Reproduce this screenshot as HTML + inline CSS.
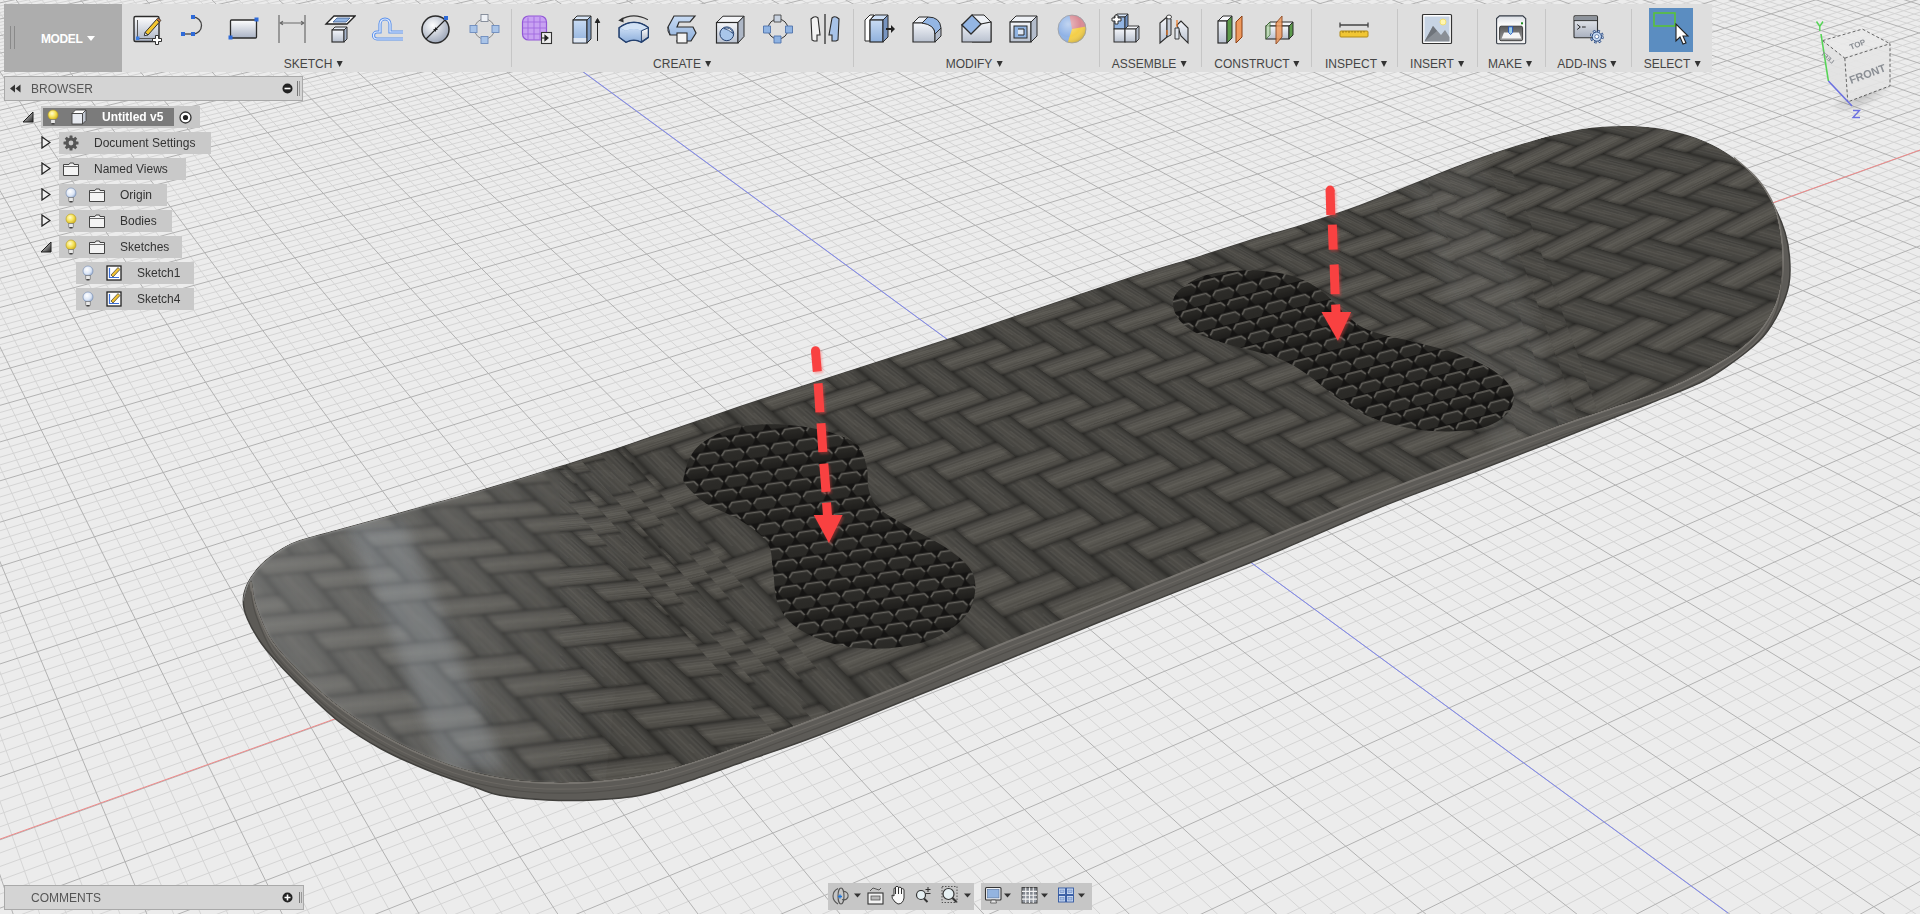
<!DOCTYPE html>
<html><head><meta charset="utf-8"><title>Fusion</title>
<style>
html,body{margin:0;padding:0;width:1920px;height:914px;overflow:hidden;background:#ececec;font-family:"Liberation Sans",sans-serif;}
.layer{position:absolute;left:0;top:0;width:1920px;height:914px;}
.clip{position:absolute;left:0;top:0;width:1920px;height:914px;overflow:hidden;}
.tex{position:absolute;left:0;top:0;transform-origin:0 0;}
.ui{position:absolute;font-family:"Liberation Sans",sans-serif;}
#tb{left:122px;top:4px;width:1590px;height:68px;background:#dedede;}
#model{left:4px;top:4px;width:118px;height:68px;background:#adadad;}
#model .grip{position:absolute;top:22px;width:1px;height:23px;background:#8a8a8a;}
#model .t{position:absolute;left:37px;top:28px;color:#fff;font-weight:bold;font-size:12px;letter-spacing:-0.4px;}
.sep{position:absolute;top:5px;width:1px;height:58px;background:#c6c6c6;}
.lbl{position:absolute;top:53px;font-size:12px;color:#454545;white-space:nowrap;line-height:14px;}
.lbl b{display:inline-block;width:0;height:0;border-left:3.5px solid transparent;border-right:3.5px solid transparent;border-top:6px solid #333;margin-left:4px;vertical-align:1px;}
.ic{position:absolute;top:10px;width:34px;height:36px;overflow:visible;}
.panel{position:absolute;background:#d4d4d4;border:1px solid #a9a9a9;box-sizing:border-box;}
.ptxt{position:absolute;font-size:12px;color:#555;line-height:14px;}
.row{position:absolute;height:21px;background:#c9c9c9;}
.rtxt{position:absolute;top:3px;font-size:12px;color:#333;line-height:14px;white-space:nowrap;}
.tri{position:absolute;}
.nav{position:absolute;top:883px;height:27px;background:#c6c6c6;}

</style></head><body>
<svg class="layer" width="1920" height="914" viewBox="0 0 1920 914">
<rect width="1920" height="914" fill="#ececec"/>
<path d="M-2.0 795.8L40.4 916.0M-2.0 728.6L67.1 916.0M-2.0 666.8L93.9 916.0M-2.0 609.8L120.8 916.0M-2.0 508.1L174.6 916.0M-2.0 462.5L201.7 916.0M-2.0 420.0L228.8 916.0M-2.0 380.3L255.9 916.0M-2.0 308.1L310.5 916.0M-2.0 275.2L337.8 916.0M-2.0 244.2L365.2 916.0M-2.0 214.9L392.7 916.0M-2.0 161.1L447.9 916.0M-2.0 136.2L475.6 916.0M-2.0 112.6L503.4 916.0M-2.0 90.1L531.2 916.0M-2.0 48.4L587.0 916.0M-2.0 29.0L615.0 916.0M-2.0 10.4L643.1 916.0M1.9 -2.0L671.3 916.0M27.5 -2.0L727.8 916.0M40.3 -2.0L756.2 916.0M53.2 -2.0L784.6 916.0M66.1 -2.0L813.1 916.0M92.0 -2.0L870.3 916.0M105.0 -2.0L899.0 916.0M118.0 -2.0L927.8 916.0M131.1 -2.0L956.7 916.0M157.3 -2.0L1014.6 916.0M170.5 -2.0L1043.6 916.0M183.6 -2.0L1072.8 916.0M196.9 -2.0L1102.0 916.0M223.4 -2.0L1160.6 916.0M236.7 -2.0L1190.0 916.0M250.1 -2.0L1219.5 916.0M263.4 -2.0L1249.1 916.0M290.3 -2.0L1308.4 916.0M303.8 -2.0L1338.2 916.0M317.3 -2.0L1368.1 916.0M330.9 -2.0L1398.0 916.0M358.1 -2.0L1458.1 916.0M371.7 -2.0L1488.3 916.0M385.4 -2.0L1518.5 916.0M399.1 -2.0L1548.9 916.0M426.7 -2.0L1609.7 916.0M440.5 -2.0L1640.3 916.0M454.4 -2.0L1670.9 916.0M468.3 -2.0L1701.6 916.0M496.1 -2.0L1763.2 916.0M510.1 -2.0L1794.2 916.0M524.2 -2.0L1825.2 916.0M538.3 -2.0L1856.3 916.0M566.5 -2.0L1918.7 916.0M580.7 -2.0L1922.0 897.2M594.9 -2.0L1922.0 876.7M609.2 -2.0L1922.0 856.6M637.8 -2.0L1922.0 817.6M652.1 -2.0L1922.0 798.8M666.5 -2.0L1922.0 780.4M681.0 -2.0L1922.0 762.3M709.9 -2.0L1922.0 727.3M724.5 -2.0L1922.0 710.3M739.1 -2.0L1922.0 693.7M753.7 -2.0L1922.0 677.4M783.1 -2.0L1922.0 645.8M797.8 -2.0L1922.0 630.4M812.6 -2.0L1922.0 615.3M827.4 -2.0L1922.0 600.5M857.1 -2.0L1922.0 571.8M872.1 -2.0L1922.0 557.8M887.0 -2.0L1922.0 544.1M902.0 -2.0L1922.0 530.6M932.2 -2.0L1922.0 504.4M947.3 -2.0L1922.0 491.6M962.5 -2.0L1922.0 479.1M977.7 -2.0L1922.0 466.7M1008.2 -2.0L1922.0 442.7M1023.6 -2.0L1922.0 431.0M1038.9 -2.0L1922.0 419.4M1054.3 -2.0L1922.0 408.1M1085.3 -2.0L1922.0 386.0M1100.8 -2.0L1922.0 375.2M1116.4 -2.0L1922.0 364.6M1132.0 -2.0L1922.0 354.2M1163.4 -2.0L1922.0 333.8M1179.1 -2.0L1922.0 323.8M1194.9 -2.0L1922.0 314.0M1210.7 -2.0L1922.0 304.4M1242.5 -2.0L1922.0 285.5M1258.5 -2.0L1922.0 276.3M1274.5 -2.0L1922.0 267.2M1290.5 -2.0L1922.0 258.2M1322.7 -2.0L1922.0 240.7M1338.9 -2.0L1922.0 232.1M1355.1 -2.0L1922.0 223.7M1371.4 -2.0L1922.0 215.3M1404.1 -2.0L1922.0 199.0M1420.5 -2.0L1922.0 191.1M1436.9 -2.0L1922.0 183.2M1453.4 -2.0L1922.0 175.4M1486.5 -2.0L1922.0 160.2M1503.1 -2.0L1922.0 152.7M1519.8 -2.0L1922.0 145.4M1536.5 -2.0L1922.0 138.1M1570.1 -2.0L1922.0 123.9M1586.9 -2.0L1922.0 116.9M1603.8 -2.0L1922.0 110.0M1620.8 -2.0L1922.0 103.2M1654.8 -2.0L1922.0 89.9M1671.9 -2.0L1922.0 83.4M1689.1 -2.0L1922.0 76.9M1706.3 -2.0L1922.0 70.5M1740.8 -2.0L1922.0 58.0M1758.1 -2.0L1922.0 51.9M1775.5 -2.0L1922.0 45.8M1792.9 -2.0L1922.0 39.8M1828.0 -2.0L1922.0 28.0M1845.5 -2.0L1922.0 22.2M1863.2 -2.0L1922.0 16.5M1880.8 -2.0L1922.0 10.8M1916.4 -2.0L1922.0 -0.3M-2.0 0.1L7.9 -2.0M-2.0 6.4L37.2 -2.0M-2.0 9.6L51.9 -2.0M-2.0 12.9L66.7 -2.0M-2.0 16.1L81.4 -2.0M-2.0 22.7L111.1 -2.0M-2.0 26.0L126.0 -2.0M-2.0 29.4L141.0 -2.0M-2.0 32.7L156.0 -2.0M-2.0 39.6L186.1 -2.0M-2.0 43.0L201.2 -2.0M-2.0 46.5L216.4 -2.0M-2.0 50.1L231.6 -2.0M-2.0 57.2L262.1 -2.0M-2.0 60.8L277.5 -2.0M-2.0 64.4L292.9 -2.0M-2.0 68.1L308.3 -2.0M-2.0 75.6L339.3 -2.0M-2.0 79.3L354.8 -2.0M-2.0 83.1L370.4 -2.0M-2.0 87.0L386.1 -2.0M-2.0 94.7L417.5 -2.0M-2.0 98.7L433.3 -2.0M-2.0 102.6L449.1 -2.0M-2.0 106.6L465.0 -2.0M-2.0 114.7L496.9 -2.0M-2.0 118.9L512.9 -2.0M-2.0 123.0L528.9 -2.0M-2.0 127.2L545.0 -2.0M-2.0 135.7L577.4 -2.0M-2.0 140.0L593.6 -2.0M-2.0 144.3L609.9 -2.0M-2.0 148.7L626.2 -2.0M-2.0 157.6L659.1 -2.0M-2.0 162.1L675.5 -2.0M-2.0 166.6L692.1 -2.0M-2.0 171.2L708.7 -2.0M-2.0 180.5L742.0 -2.0M-2.0 185.3L758.7 -2.0M-2.0 190.0L775.5 -2.0M-2.0 194.9L792.3 -2.0M-2.0 204.6L826.1 -2.0M-2.0 209.6L843.1 -2.0M-2.0 214.6L860.1 -2.0M-2.0 219.6L877.2 -2.0M-2.0 229.9L911.5 -2.0M-2.0 235.1L928.8 -2.0M-2.0 240.4L946.0 -2.0M-2.0 245.7L963.4 -2.0M-2.0 256.5L998.2 -2.0M-2.0 262.0L1015.7 -2.0M-2.0 267.5L1033.3 -2.0M-2.0 273.1L1050.9 -2.0M-2.0 284.5L1086.2 -2.0M-2.0 290.3L1104.0 -2.0M-2.0 296.1L1121.8 -2.0M-2.0 302.0L1139.7 -2.0M-2.0 314.0L1175.6 -2.0M-2.0 320.1L1193.6 -2.0M-2.0 326.3L1211.7 -2.0M-2.0 332.5L1229.9 -2.0M-2.0 345.2L1266.4 -2.0M-2.0 351.6L1284.7 -2.0M-2.0 358.2L1303.1 -2.0M-2.0 364.7L1321.5 -2.0M-2.0 378.2L1358.5 -2.0M-2.0 385.0L1377.1 -2.0M-2.0 391.9L1395.8 -2.0M-2.0 398.9L1414.5 -2.0M-2.0 413.1L1452.1 -2.0M-2.0 420.3L1471.0 -2.0M-2.0 427.6L1490.0 -2.0M-2.0 435.0L1509.0 -2.0M-2.0 450.1L1547.2 -2.0M-2.0 457.8L1566.4 -2.0M-2.0 465.5L1585.7 -2.0M-2.0 473.4L1605.0 -2.0M-2.0 489.5L1643.9 -2.0M-2.0 497.6L1663.4 -2.0M-2.0 505.9L1682.9 -2.0M-2.0 514.3L1702.6 -2.0M-2.0 531.4L1742.0 -2.0M-2.0 540.1L1761.9 -2.0M-2.0 548.9L1781.7 -2.0M-2.0 557.8L1801.7 -2.0M-2.0 576.1L1841.8 -2.0M-2.0 585.4L1862.0 -2.0M-2.0 594.8L1882.2 -2.0M-2.0 604.4L1902.4 -2.0M-2.0 623.9L1922.0 4.8M-2.0 633.9L1922.0 11.5M-2.0 644.0L1922.0 18.2M-2.0 654.2L1922.0 25.1M-2.0 675.2L1922.0 39.1M-2.0 685.9L1922.0 46.2M-2.0 696.7L1922.0 53.5M-2.0 707.7L1922.0 60.9M-2.0 730.3L1922.0 75.9M-2.0 741.8L1922.0 83.6M-2.0 753.5L1922.0 91.4M-2.0 765.3L1922.0 99.3M-2.0 789.6L1922.0 115.6M-2.0 802.0L1922.0 123.9M-2.0 814.7L1922.0 132.3M-2.0 827.5L1922.0 140.9M-2.0 853.7L1922.0 158.4M-2.0 867.2L1922.0 167.4M-2.0 880.9L1922.0 176.6M-2.0 894.8L1922.0 185.9M17.4 916.0L1922.0 204.9M56.2 916.0L1922.0 214.7M95.0 916.0L1922.0 224.6M134.0 916.0L1922.0 234.7M212.4 916.0L1922.0 255.4M251.8 916.0L1922.0 266.1M291.4 916.0L1922.0 276.9M331.0 916.0L1922.0 287.9M410.8 916.0L1922.0 310.6M450.9 916.0L1922.0 322.2M491.1 916.0L1922.0 334.1M531.5 916.0L1922.0 346.2M612.7 916.0L1922.0 371.1M653.5 916.0L1922.0 383.8M694.4 916.0L1922.0 396.9M735.5 916.0L1922.0 410.2M818.1 916.0L1922.0 437.6M859.6 916.0L1922.0 451.7M901.3 916.0L1922.0 466.1M943.1 916.0L1922.0 480.9M1027.2 916.0L1922.0 511.2M1069.4 916.0L1922.0 526.9M1111.9 916.0L1922.0 542.9M1154.4 916.0L1922.0 559.3M1240.0 916.0L1922.0 593.1M1283.1 916.0L1922.0 610.6M1326.2 916.0L1922.0 628.5M1369.6 916.0L1922.0 646.8M1456.7 916.0L1922.0 684.7M1500.5 916.0L1922.0 704.4M1544.5 916.0L1922.0 724.5M1588.7 916.0L1922.0 745.1M1677.4 916.0L1922.0 787.9M1722.0 916.0L1922.0 810.1M1766.8 916.0L1922.0 832.9M1811.8 916.0L1922.0 856.3M1902.2 916.0L1922.0 905.0" stroke="#d5d5d5" stroke-width="1" fill="none"/>
<path d="M-2.0 869.2L13.8 916.0M-2.0 557.0L147.7 916.0M-2.0 343.1L283.2 916.0M-2.0 187.3L420.3 916.0M-2.0 68.8L559.1 916.0M14.7 -2.0L699.5 916.0M79.0 -2.0L841.7 916.0M144.2 -2.0L985.6 916.0M210.1 -2.0L1131.2 916.0M276.9 -2.0L1278.7 916.0M344.4 -2.0L1428.1 916.0M412.9 -2.0L1579.3 916.0M482.2 -2.0L1732.4 916.0M552.4 -2.0L1887.4 916.0M623.4 -2.0L1922.0 836.9M695.4 -2.0L1922.0 744.6M768.4 -2.0L1922.0 661.4M842.2 -2.0L1922.0 586.0M917.1 -2.0L1922.0 517.4M992.9 -2.0L1922.0 454.6M1069.8 -2.0L1922.0 397.0M1147.7 -2.0L1922.0 343.9M1226.6 -2.0L1922.0 294.9M1306.6 -2.0L1922.0 249.4M1387.7 -2.0L1922.0 207.1M1469.9 -2.0L1922.0 167.8M1553.3 -2.0L1922.0 131.0M1637.8 -2.0L1922.0 96.5M1723.5 -2.0L1922.0 64.2M1810.4 -2.0L1922.0 33.9M1898.6 -2.0L1922.0 5.3M-2.0 3.3L22.5 -2.0M-2.0 19.4L96.3 -2.0M-2.0 36.1L171.0 -2.0M-2.0 53.6L246.9 -2.0M-2.0 71.8L323.8 -2.0M-2.0 90.8L401.8 -2.0M-2.0 110.7L480.9 -2.0M-2.0 131.4L561.2 -2.0M-2.0 153.1L642.6 -2.0M-2.0 175.9L725.3 -2.0M-2.0 199.7L809.2 -2.0M-2.0 224.8L894.3 -2.0M-2.0 251.1L980.8 -2.0M-2.0 278.8L1068.5 -2.0M-2.0 308.0L1157.6 -2.0M-2.0 338.8L1248.1 -2.0M-2.0 371.4L1340.0 -2.0M-2.0 405.9L1433.3 -2.0M-2.0 442.5L1528.1 -2.0M-2.0 481.4L1624.4 -2.0M-2.0 522.8L1722.3 -2.0M-2.0 566.9L1821.7 -2.0M-2.0 614.1L1922.0 -1.7M-2.0 664.6L1922.0 32.0M-2.0 718.9L1922.0 68.3M-2.0 777.4L1922.0 107.4M-2.0 840.5L1922.0 149.6M-2.0 908.9L1922.0 195.3M173.2 916.0L1922.0 245.0M370.9 916.0L1922.0 299.2M572.0 916.0L1922.0 358.5M776.7 916.0L1922.0 423.8M985.1 916.0L1922.0 495.9M1197.1 916.0L1922.0 576.0M1413.1 916.0L1922.0 665.5M1632.9 916.0L1922.0 766.2M1856.9 916.0L1922.0 880.3" stroke="#b2b2b2" stroke-width="1" fill="none"/>
<path d="M0 839.1L1920 150.0" stroke="#f08a8a" stroke-width="1" fill="none"/>
<path d="M583.2 71.8L1728.1 913.2" stroke="#8088f0" stroke-width="1" fill="none"/>
<defs><clipPath id="outc"><path d="M243.3 601.5C243.3 595.7 244.5 590.1 247.5 584.0C250.5 577.9 255.7 570.6 261.5 564.8C267.3 559.0 276.1 553.0 282.5 549.0C288.9 545.0 289.8 544.2 300.0 540.8C310.2 537.4 329.2 532.8 343.8 528.8C358.4 524.8 372.9 520.8 387.5 516.8C402.1 512.8 416.7 508.6 431.3 504.5C445.9 500.4 460.4 496.7 475.0 492.5C489.6 488.3 504.2 483.9 518.8 479.5C533.4 475.1 548.0 470.5 562.6 466.0C577.2 461.5 591.7 457.1 606.3 452.3C620.9 447.6 634.5 442.8 650.1 437.5C665.7 432.2 679.8 427.2 700.0 420.4C720.2 413.6 730.1 409.9 771.3 396.5C812.5 383.1 906.2 353.2 947.2 339.8C988.2 326.4 987.0 326.2 1017.5 315.9C1048.0 305.6 1099.6 287.9 1130.0 278.0C1160.4 268.1 1178.5 263.3 1200.0 256.6C1221.5 249.9 1242.4 242.9 1259.1 237.8C1275.8 232.7 1283.5 231.2 1300.0 225.9C1316.5 220.7 1338.8 213.5 1358.3 206.3C1377.8 199.1 1397.2 190.6 1416.7 182.9C1436.2 175.2 1455.6 167.2 1475.0 160.3C1494.4 153.4 1518.7 145.8 1533.3 141.4C1547.9 137.0 1552.8 136.2 1562.5 134.1C1572.2 132.0 1580.5 129.8 1591.6 128.6C1602.6 127.4 1616.4 126.4 1628.8 126.7C1641.2 127.0 1653.6 128.0 1666.0 130.5C1678.4 133.0 1692.1 136.9 1703.3 141.6C1714.5 146.2 1724.3 151.9 1733.0 158.4C1741.7 164.9 1748.5 172.6 1755.3 180.7C1762.1 188.8 1769.0 198.0 1774.0 206.7C1779.0 215.4 1782.5 224.1 1785.1 232.8C1787.7 241.5 1789.0 250.1 1789.6 258.8C1790.2 267.5 1790.5 276.2 1788.8 284.9C1787.1 293.6 1783.8 302.3 1779.5 311.0C1775.2 319.7 1769.9 328.9 1762.8 337.0C1755.7 345.1 1746.6 352.0 1736.7 359.3C1726.8 366.6 1717.7 373.7 1703.3 381.0C1688.9 388.3 1667.3 396.2 1650.1 403.2C1632.9 410.2 1616.7 416.4 1600.0 423.0C1583.3 429.6 1570.8 434.6 1550.0 442.7C1529.2 450.8 1502.1 461.3 1475.0 471.6C1447.9 481.9 1416.7 492.7 1387.5 504.4C1358.3 516.1 1323.0 531.8 1300.0 541.6C1277.0 551.4 1282.5 549.6 1249.2 563.0C1215.9 576.4 1141.5 605.2 1100.0 621.8C1058.5 638.4 1032.3 649.5 1000.0 662.5C967.7 675.5 937.2 687.5 906.0 700.0C874.8 712.5 838.5 727.6 812.5 737.5C786.5 747.4 770.8 752.1 750.0 759.4C729.2 766.7 705.7 775.3 687.5 781.3C669.3 787.3 656.2 792.2 640.6 795.3C625.0 798.4 609.4 799.2 593.8 800.0C578.2 800.8 562.5 800.8 546.9 800.0C531.3 799.2 512.0 797.5 500.0 795.3C488.0 793.1 487.3 791.3 475.0 787.0C462.7 782.7 441.8 775.9 426.0 769.5C410.2 763.1 394.5 756.1 380.5 748.5C366.5 740.9 353.7 732.8 342.0 724.0C330.3 715.2 320.4 705.3 310.5 696.0C300.6 686.7 290.7 676.8 282.5 668.0C274.3 659.2 267.3 651.7 261.5 643.5C255.7 635.3 250.5 626.0 247.5 619.0C244.5 612.0 243.3 607.3 243.3 601.5Z"/></clipPath></defs><path d="M243.3 601.5C243.3 595.7 244.5 590.1 247.5 584.0C250.5 577.9 255.7 570.6 261.5 564.8C267.3 559.0 276.1 553.0 282.5 549.0C288.9 545.0 289.8 544.2 300.0 540.8C310.2 537.4 329.2 532.8 343.8 528.8C358.4 524.8 372.9 520.8 387.5 516.8C402.1 512.8 416.7 508.6 431.3 504.5C445.9 500.4 460.4 496.7 475.0 492.5C489.6 488.3 504.2 483.9 518.8 479.5C533.4 475.1 548.0 470.5 562.6 466.0C577.2 461.5 591.7 457.1 606.3 452.3C620.9 447.6 634.5 442.8 650.1 437.5C665.7 432.2 679.8 427.2 700.0 420.4C720.2 413.6 730.1 409.9 771.3 396.5C812.5 383.1 906.2 353.2 947.2 339.8C988.2 326.4 987.0 326.2 1017.5 315.9C1048.0 305.6 1099.6 287.9 1130.0 278.0C1160.4 268.1 1178.5 263.3 1200.0 256.6C1221.5 249.9 1242.4 242.9 1259.1 237.8C1275.8 232.7 1283.5 231.2 1300.0 225.9C1316.5 220.7 1338.8 213.5 1358.3 206.3C1377.8 199.1 1397.2 190.6 1416.7 182.9C1436.2 175.2 1455.6 167.2 1475.0 160.3C1494.4 153.4 1518.7 145.8 1533.3 141.4C1547.9 137.0 1552.8 136.2 1562.5 134.1C1572.2 132.0 1580.5 129.8 1591.6 128.6C1602.6 127.4 1616.4 126.4 1628.8 126.7C1641.2 127.0 1653.6 128.0 1666.0 130.5C1678.4 133.0 1692.1 136.9 1703.3 141.6C1714.5 146.2 1724.3 151.9 1733.0 158.4C1741.7 164.9 1748.5 172.6 1755.3 180.7C1762.1 188.8 1769.0 198.0 1774.0 206.7C1779.0 215.4 1782.5 224.1 1785.1 232.8C1787.7 241.5 1789.0 250.1 1789.6 258.8C1790.2 267.5 1790.5 276.2 1788.8 284.9C1787.1 293.6 1783.8 302.3 1779.5 311.0C1775.2 319.7 1769.9 328.9 1762.8 337.0C1755.7 345.1 1746.6 352.0 1736.7 359.3C1726.8 366.6 1717.7 373.7 1703.3 381.0C1688.9 388.3 1667.3 396.2 1650.1 403.2C1632.9 410.2 1616.7 416.4 1600.0 423.0C1583.3 429.6 1570.8 434.6 1550.0 442.7C1529.2 450.8 1502.1 461.3 1475.0 471.6C1447.9 481.9 1416.7 492.7 1387.5 504.4C1358.3 516.1 1323.0 531.8 1300.0 541.6C1277.0 551.4 1282.5 549.6 1249.2 563.0C1215.9 576.4 1141.5 605.2 1100.0 621.8C1058.5 638.4 1032.3 649.5 1000.0 662.5C967.7 675.5 937.2 687.5 906.0 700.0C874.8 712.5 838.5 727.6 812.5 737.5C786.5 747.4 770.8 752.1 750.0 759.4C729.2 766.7 705.7 775.3 687.5 781.3C669.3 787.3 656.2 792.2 640.6 795.3C625.0 798.4 609.4 799.2 593.8 800.0C578.2 800.8 562.5 800.8 546.9 800.0C531.3 799.2 512.0 797.5 500.0 795.3C488.0 793.1 487.3 791.3 475.0 787.0C462.7 782.7 441.8 775.9 426.0 769.5C410.2 763.1 394.5 756.1 380.5 748.5C366.5 740.9 353.7 732.8 342.0 724.0C330.3 715.2 320.4 705.3 310.5 696.0C300.6 686.7 290.7 676.8 282.5 668.0C274.3 659.2 267.3 651.7 261.5 643.5C255.7 635.3 250.5 626.0 247.5 619.0C244.5 612.0 243.3 607.3 243.3 601.5Z" fill="#5d5b57" stroke="#403f3c" stroke-width="1.5"/>
<path d="M1733.0 158.4C1736.7 161.7 1748.8 171.1 1755.0 178.0C1761.2 184.9 1766.2 192.7 1770.0 200.0C1773.8 207.3 1775.7 211.8 1777.7 221.6C1779.7 231.4 1782.0 246.4 1782.0 258.8C1782.0 271.2 1780.9 284.8 1777.7 296.0C1774.5 307.2 1769.0 317.1 1762.8 325.8C1756.6 334.5 1749.2 341.2 1740.5 348.0C1731.8 354.8 1723.1 359.9 1710.7 366.7C1698.3 373.4 1682.8 381.6 1666.0 388.5C1649.2 395.4 1628.7 401.6 1610.0 408.0C1591.3 414.4 1576.5 418.9 1554.0 427.0C1531.5 435.1 1502.8 446.0 1475.0 456.3C1447.2 466.6 1416.7 477.7 1387.5 489.0C1358.3 500.3 1347.9 504.8 1300.0 524.1C1252.1 543.4 1150.0 584.8 1100.0 604.7C1050.0 624.6 1032.3 630.7 1000.0 643.8C967.7 656.8 937.2 670.3 906.0 682.8C874.8 695.3 843.7 707.0 812.5 718.8C781.3 730.5 744.8 744.1 718.8 753.0C692.7 761.9 676.8 767.3 656.0 772.0C635.2 776.7 614.8 779.5 593.8 781.0C572.8 782.5 549.8 782.5 530.0 781.0C510.2 779.5 492.3 776.2 475.0 772.0C457.7 767.8 442.3 762.3 426.0 755.5C409.7 748.7 392.2 739.8 377.0 731.0C361.8 722.2 347.8 712.9 335.0 703.0C322.2 693.1 310.5 682.0 300.0 671.5C289.5 661.0 279.3 651.1 272.0 640.0C264.7 628.9 259.8 614.9 256.3 605.0C252.8 595.1 251.9 584.6 251.0 580.5" fill="none" stroke="#77746f" stroke-width="4"/><g clip-path="url(#outc)"><path d="M1733.0 158.4C1736.7 161.7 1748.8 171.1 1755.0 178.0C1761.2 184.9 1766.2 192.7 1770.0 200.0C1773.8 207.3 1775.7 211.8 1777.7 221.6C1779.7 231.4 1782.0 246.4 1782.0 258.8C1782.0 271.2 1780.9 284.8 1777.7 296.0C1774.5 307.2 1769.0 317.1 1762.8 325.8C1756.6 334.5 1749.2 341.2 1740.5 348.0C1731.8 354.8 1723.1 359.9 1710.7 366.7C1698.3 373.4 1682.8 381.6 1666.0 388.5C1649.2 395.4 1628.7 401.6 1610.0 408.0C1591.3 414.4 1576.5 418.9 1554.0 427.0C1531.5 435.1 1502.8 446.0 1475.0 456.3C1447.2 466.6 1416.7 477.7 1387.5 489.0C1358.3 500.3 1347.9 504.8 1300.0 524.1C1252.1 543.4 1150.0 584.8 1100.0 604.7C1050.0 624.6 1032.3 630.7 1000.0 643.8C967.7 656.8 937.2 670.3 906.0 682.8C874.8 695.3 843.7 707.0 812.5 718.8C781.3 730.5 744.8 744.1 718.8 753.0C692.7 761.9 676.8 767.3 656.0 772.0C635.2 776.7 614.8 779.5 593.8 781.0C572.8 782.5 549.8 782.5 530.0 781.0C510.2 779.5 492.3 776.2 475.0 772.0C457.7 767.8 442.3 762.3 426.0 755.5C409.7 748.7 392.2 739.8 377.0 731.0C361.8 722.2 347.8 712.9 335.0 703.0C322.2 693.1 310.5 682.0 300.0 671.5C289.5 661.0 279.3 651.1 272.0 640.0C264.7 628.9 259.8 614.9 256.3 605.0C252.8 595.1 251.9 584.6 251.0 580.5" fill="none" stroke="#74716b" stroke-width="1.2" transform="translate(0 7)" opacity=".55"/><path d="M1733.0 158.4C1736.7 161.7 1748.8 171.1 1755.0 178.0C1761.2 184.9 1766.2 192.7 1770.0 200.0C1773.8 207.3 1775.7 211.8 1777.7 221.6C1779.7 231.4 1782.0 246.4 1782.0 258.8C1782.0 271.2 1780.9 284.8 1777.7 296.0C1774.5 307.2 1769.0 317.1 1762.8 325.8C1756.6 334.5 1749.2 341.2 1740.5 348.0C1731.8 354.8 1723.1 359.9 1710.7 366.7C1698.3 373.4 1682.8 381.6 1666.0 388.5C1649.2 395.4 1628.7 401.6 1610.0 408.0C1591.3 414.4 1576.5 418.9 1554.0 427.0C1531.5 435.1 1502.8 446.0 1475.0 456.3C1447.2 466.6 1416.7 477.7 1387.5 489.0C1358.3 500.3 1347.9 504.8 1300.0 524.1C1252.1 543.4 1150.0 584.8 1100.0 604.7C1050.0 624.6 1032.3 630.7 1000.0 643.8C967.7 656.8 937.2 670.3 906.0 682.8C874.8 695.3 843.7 707.0 812.5 718.8C781.3 730.5 744.8 744.1 718.8 753.0C692.7 761.9 676.8 767.3 656.0 772.0C635.2 776.7 614.8 779.5 593.8 781.0C572.8 782.5 549.8 782.5 530.0 781.0C510.2 779.5 492.3 776.2 475.0 772.0C457.7 767.8 442.3 762.3 426.0 755.5C409.7 748.7 392.2 739.8 377.0 731.0C361.8 722.2 347.8 712.9 335.0 703.0C322.2 693.1 310.5 682.0 300.0 671.5C289.5 661.0 279.3 651.1 272.0 640.0C264.7 628.9 259.8 614.9 256.3 605.0C252.8 595.1 251.9 584.6 251.0 580.5" fill="none" stroke="#45443f" stroke-width="1.2" transform="translate(0 11)" opacity=".5"/></g>

</svg>
<div class="clip" style="clip-path:path('M243.3 601.5C242.7 602.1 244.5 590.1 247.5 584.0C250.5 577.9 255.7 570.6 261.5 564.8C267.3 559.0 276.1 553.0 282.5 549.0C288.9 545.0 289.8 544.2 300.0 540.8C310.2 537.4 329.2 532.8 343.8 528.8C358.4 524.8 372.9 520.8 387.5 516.8C402.1 512.8 416.7 508.6 431.3 504.5C445.9 500.4 460.4 496.7 475.0 492.5C489.6 488.3 504.2 483.9 518.8 479.5C533.4 475.1 548.0 470.5 562.6 466.0C577.2 461.5 591.7 457.1 606.3 452.3C620.9 447.6 634.5 442.8 650.1 437.5C665.7 432.2 679.8 427.2 700.0 420.4C720.2 413.6 730.1 409.9 771.3 396.5C812.5 383.1 906.2 353.2 947.2 339.8C988.2 326.4 987.0 326.2 1017.5 315.9C1048.0 305.6 1099.6 287.9 1130.0 278.0C1160.4 268.1 1178.5 263.3 1200.0 256.6C1221.5 249.9 1242.4 242.9 1259.1 237.8C1275.8 232.7 1283.5 231.2 1300.0 225.9C1316.5 220.7 1338.8 213.5 1358.3 206.3C1377.8 199.1 1397.2 190.6 1416.7 182.9C1436.2 175.2 1455.6 167.2 1475.0 160.3C1494.4 153.4 1518.7 145.8 1533.3 141.4C1547.9 137.0 1552.8 136.2 1562.5 134.1C1572.2 132.0 1580.5 129.8 1591.6 128.6C1602.6 127.4 1616.4 126.4 1628.8 126.7C1641.2 127.0 1653.6 128.0 1666.0 130.5C1678.4 133.0 1692.1 136.9 1703.3 141.6C1714.5 146.2 1724.4 152.3 1733.0 158.4C1741.6 164.5 1748.8 171.1 1755.0 178.0C1761.2 184.9 1766.2 192.7 1770.0 200.0C1773.8 207.3 1775.7 211.8 1777.7 221.6C1779.7 231.4 1782.0 246.4 1782.0 258.8C1782.0 271.2 1780.9 284.8 1777.7 296.0C1774.5 307.2 1769.0 317.1 1762.8 325.8C1756.6 334.5 1749.2 341.2 1740.5 348.0C1731.8 354.8 1723.1 359.9 1710.7 366.7C1698.3 373.4 1682.8 381.6 1666.0 388.5C1649.2 395.4 1628.7 401.6 1610.0 408.0C1591.3 414.4 1576.5 418.9 1554.0 427.0C1531.5 435.1 1502.8 446.0 1475.0 456.3C1447.2 466.6 1416.7 477.7 1387.5 489.0C1358.3 500.3 1347.9 504.8 1300.0 524.1C1252.1 543.4 1150.0 584.8 1100.0 604.7C1050.0 624.6 1032.3 630.7 1000.0 643.8C967.7 656.8 937.2 670.3 906.0 682.8C874.8 695.3 843.7 707.0 812.5 718.8C781.3 730.5 744.8 744.1 718.8 753.0C692.7 761.9 676.8 767.3 656.0 772.0C635.2 776.7 614.8 779.5 593.8 781.0C572.8 782.5 549.8 782.5 530.0 781.0C510.2 779.5 492.3 776.2 475.0 772.0C457.7 767.8 442.3 762.3 426.0 755.5C409.7 748.7 392.2 739.8 377.0 731.0C361.8 722.2 347.8 712.9 335.0 703.0C322.2 693.1 310.5 682.0 300.0 671.5C289.5 661.0 279.3 651.1 272.0 640.0C264.7 628.9 259.8 614.9 256.3 605.0C252.8 595.1 253.2 581.1 251.0 580.5C248.8 579.9 243.9 600.9 243.3 601.5Z')">
<div class="tex" style="width:2181px;height:1000px;transform:matrix3d(0.99784392,-0.21385887,0,0.00017203134,0.17735377,0.24472651,0,-0.00032156653,0,0,1,0,30.003879,511.12193,0,1)">
<svg width="2181" height="1000"><defs>
<linearGradient id="gl" x1="0" y1="0" x2="0" y2="1"><stop offset="0" stop-color="#32312e"/><stop offset=".12" stop-color="#4a4844"/><stop offset=".5" stop-color="#5a5852"/><stop offset=".88" stop-color="#4c4a45"/><stop offset="1" stop-color="#32312e"/></linearGradient>
<linearGradient id="gd" x1="0" y1="0" x2="1" y2="0"><stop offset="0" stop-color="#302f2c"/><stop offset=".12" stop-color="#43423e"/><stop offset=".5" stop-color="#4e4c47"/><stop offset=".88" stop-color="#43423e"/><stop offset="1" stop-color="#302f2c"/></linearGradient>
<linearGradient id="glx" x1="0" y1="0" x2="1" y2="0"><stop offset="0" stop-color="#000" stop-opacity=".22"/><stop offset=".07" stop-color="#000" stop-opacity="0"/><stop offset=".93" stop-color="#000" stop-opacity="0"/><stop offset="1" stop-color="#000" stop-opacity=".22"/></linearGradient>
<linearGradient id="gdy" x1="0" y1="0" x2="0" y2="1"><stop offset="0" stop-color="#000" stop-opacity=".22"/><stop offset=".07" stop-color="#000" stop-opacity="0"/><stop offset=".93" stop-color="#000" stop-opacity="0"/><stop offset="1" stop-color="#000" stop-opacity=".22"/></linearGradient>
<g id="L"><rect width="80" height="40" fill="url(#gl)"/><path d="M2 9H60M10 14H78M0 19H45M30 23H80M5 28H70M15 32H55" stroke="#fff" stroke-opacity=".05" stroke-width="1.2"/><path d="M0 12H35M40 17H80M8 25H50M20 30H80" stroke="#000" stroke-opacity=".1" stroke-width="1"/><rect width="80" height="40" fill="url(#glx)"/></g>
<g id="D"><rect width="40" height="80" fill="url(#gd)"/><path d="M9 2V60M14 10V78M19 0V45M23 30V80M28 5V70M32 15V55" stroke="#fff" stroke-opacity=".05" stroke-width="1.2"/><path d="M12 0V35M17 40V80M25 8V50M30 20V80" stroke="#000" stroke-opacity=".1" stroke-width="1"/><rect width="40" height="80" fill="url(#gdy)"/></g>
<pattern id="tw" width="160" height="160" patternUnits="userSpaceOnUse">
<use href="#L" x="0" y="0"/><use href="#L" x="40" y="40"/><use href="#L" x="80" y="80"/><use href="#L" x="120" y="120"/><use href="#L" x="-40" y="120"/>
<use href="#D" x="0" y="40"/><use href="#D" x="40" y="80"/><use href="#D" x="80" y="120"/><use href="#D" x="80" y="-40"/><use href="#D" x="120" y="0"/>
</pattern></defs>
<rect width="2181" height="1000" fill="url(#tw)"/></svg>
</div></div>
<div style="position:absolute;left:0;top:0;width:1920px;height:914px;clip-path:polygon(1363px 0px,1920px 0px,1920px 914px,1689px 914px)"><div class="clip" style="clip-path:path('M243.3 601.5C242.7 602.1 244.5 590.1 247.5 584.0C250.5 577.9 255.7 570.6 261.5 564.8C267.3 559.0 276.1 553.0 282.5 549.0C288.9 545.0 289.8 544.2 300.0 540.8C310.2 537.4 329.2 532.8 343.8 528.8C358.4 524.8 372.9 520.8 387.5 516.8C402.1 512.8 416.7 508.6 431.3 504.5C445.9 500.4 460.4 496.7 475.0 492.5C489.6 488.3 504.2 483.9 518.8 479.5C533.4 475.1 548.0 470.5 562.6 466.0C577.2 461.5 591.7 457.1 606.3 452.3C620.9 447.6 634.5 442.8 650.1 437.5C665.7 432.2 679.8 427.2 700.0 420.4C720.2 413.6 730.1 409.9 771.3 396.5C812.5 383.1 906.2 353.2 947.2 339.8C988.2 326.4 987.0 326.2 1017.5 315.9C1048.0 305.6 1099.6 287.9 1130.0 278.0C1160.4 268.1 1178.5 263.3 1200.0 256.6C1221.5 249.9 1242.4 242.9 1259.1 237.8C1275.8 232.7 1283.5 231.2 1300.0 225.9C1316.5 220.7 1338.8 213.5 1358.3 206.3C1377.8 199.1 1397.2 190.6 1416.7 182.9C1436.2 175.2 1455.6 167.2 1475.0 160.3C1494.4 153.4 1518.7 145.8 1533.3 141.4C1547.9 137.0 1552.8 136.2 1562.5 134.1C1572.2 132.0 1580.5 129.8 1591.6 128.6C1602.6 127.4 1616.4 126.4 1628.8 126.7C1641.2 127.0 1653.6 128.0 1666.0 130.5C1678.4 133.0 1692.1 136.9 1703.3 141.6C1714.5 146.2 1724.4 152.3 1733.0 158.4C1741.6 164.5 1748.8 171.1 1755.0 178.0C1761.2 184.9 1766.2 192.7 1770.0 200.0C1773.8 207.3 1775.7 211.8 1777.7 221.6C1779.7 231.4 1782.0 246.4 1782.0 258.8C1782.0 271.2 1780.9 284.8 1777.7 296.0C1774.5 307.2 1769.0 317.1 1762.8 325.8C1756.6 334.5 1749.2 341.2 1740.5 348.0C1731.8 354.8 1723.1 359.9 1710.7 366.7C1698.3 373.4 1682.8 381.6 1666.0 388.5C1649.2 395.4 1628.7 401.6 1610.0 408.0C1591.3 414.4 1576.5 418.9 1554.0 427.0C1531.5 435.1 1502.8 446.0 1475.0 456.3C1447.2 466.6 1416.7 477.7 1387.5 489.0C1358.3 500.3 1347.9 504.8 1300.0 524.1C1252.1 543.4 1150.0 584.8 1100.0 604.7C1050.0 624.6 1032.3 630.7 1000.0 643.8C967.7 656.8 937.2 670.3 906.0 682.8C874.8 695.3 843.7 707.0 812.5 718.8C781.3 730.5 744.8 744.1 718.8 753.0C692.7 761.9 676.8 767.3 656.0 772.0C635.2 776.7 614.8 779.5 593.8 781.0C572.8 782.5 549.8 782.5 530.0 781.0C510.2 779.5 492.3 776.2 475.0 772.0C457.7 767.8 442.3 762.3 426.0 755.5C409.7 748.7 392.2 739.8 377.0 731.0C361.8 722.2 347.8 712.9 335.0 703.0C322.2 693.1 310.5 682.0 300.0 671.5C289.5 661.0 279.3 651.1 272.0 640.0C264.7 628.9 259.8 614.9 256.3 605.0C252.8 595.1 253.2 581.1 251.0 580.5C248.8 579.9 243.9 600.9 243.3 601.5Z')"><div class="tex" style="width:2181px;height:1000px;transform:matrix3d(1.0340357,-0.25283217,0,0.00017203134,0.19687034,0.22868148,0,-0.00032156653,0,0,1,0,-33.148018,576.53978,0,1)"><svg width="2181" height="1000"><defs>
<linearGradient id="t_gl" x1="0" y1="0" x2="0" y2="1"><stop offset="0" stop-color="#32312e"/><stop offset=".12" stop-color="#4a4844"/><stop offset=".5" stop-color="#5a5852"/><stop offset=".88" stop-color="#4c4a45"/><stop offset="1" stop-color="#32312e"/></linearGradient>
<linearGradient id="t_gd" x1="0" y1="0" x2="1" y2="0"><stop offset="0" stop-color="#302f2c"/><stop offset=".12" stop-color="#43423e"/><stop offset=".5" stop-color="#4e4c47"/><stop offset=".88" stop-color="#43423e"/><stop offset="1" stop-color="#302f2c"/></linearGradient>
<linearGradient id="t_glx" x1="0" y1="0" x2="1" y2="0"><stop offset="0" stop-color="#000" stop-opacity=".22"/><stop offset=".07" stop-color="#000" stop-opacity="0"/><stop offset=".93" stop-color="#000" stop-opacity="0"/><stop offset="1" stop-color="#000" stop-opacity=".22"/></linearGradient>
<linearGradient id="t_gdy" x1="0" y1="0" x2="0" y2="1"><stop offset="0" stop-color="#000" stop-opacity=".22"/><stop offset=".07" stop-color="#000" stop-opacity="0"/><stop offset=".93" stop-color="#000" stop-opacity="0"/><stop offset="1" stop-color="#000" stop-opacity=".22"/></linearGradient>
<g id="t_L"><rect width="80" height="40" fill="url(#t_gl)"/><path d="M2 9H60M10 14H78M0 19H45M30 23H80M5 28H70M15 32H55" stroke="#fff" stroke-opacity=".05" stroke-width="1.2"/><path d="M0 12H35M40 17H80M8 25H50M20 30H80" stroke="#000" stroke-opacity=".1" stroke-width="1"/><rect width="80" height="40" fill="url(#t_glx)"/></g>
<g id="t_D"><rect width="40" height="80" fill="url(#t_gd)"/><path d="M9 2V60M14 10V78M19 0V45M23 30V80M28 5V70M32 15V55" stroke="#fff" stroke-opacity=".05" stroke-width="1.2"/><path d="M12 0V35M17 40V80M25 8V50M30 20V80" stroke="#000" stroke-opacity=".1" stroke-width="1"/><rect width="40" height="80" fill="url(#t_gdy)"/></g>
<pattern id="t_tw" width="160" height="160" patternUnits="userSpaceOnUse">
<use href="#t_L" x="0" y="0"/><use href="#t_L" x="40" y="40"/><use href="#t_L" x="80" y="80"/><use href="#t_L" x="120" y="120"/><use href="#t_L" x="-40" y="120"/>
<use href="#t_D" x="0" y="40"/><use href="#t_D" x="40" y="80"/><use href="#t_D" x="80" y="120"/><use href="#t_D" x="80" y="-40"/><use href="#t_D" x="120" y="0"/>
</pattern></defs>
<rect width="2181" height="1000" fill="url(#t_tw)"/></svg></div></div></div><div style="position:absolute;left:0;top:0;width:1920px;height:914px;clip-path:polygon(1385px 0px,1920px 0px,1920px 914px,1711px 914px)"><div class="clip" style="clip-path:path('M243.3 601.5C242.7 602.1 244.5 590.1 247.5 584.0C250.5 577.9 255.7 570.6 261.5 564.8C267.3 559.0 276.1 553.0 282.5 549.0C288.9 545.0 289.8 544.2 300.0 540.8C310.2 537.4 329.2 532.8 343.8 528.8C358.4 524.8 372.9 520.8 387.5 516.8C402.1 512.8 416.7 508.6 431.3 504.5C445.9 500.4 460.4 496.7 475.0 492.5C489.6 488.3 504.2 483.9 518.8 479.5C533.4 475.1 548.0 470.5 562.6 466.0C577.2 461.5 591.7 457.1 606.3 452.3C620.9 447.6 634.5 442.8 650.1 437.5C665.7 432.2 679.8 427.2 700.0 420.4C720.2 413.6 730.1 409.9 771.3 396.5C812.5 383.1 906.2 353.2 947.2 339.8C988.2 326.4 987.0 326.2 1017.5 315.9C1048.0 305.6 1099.6 287.9 1130.0 278.0C1160.4 268.1 1178.5 263.3 1200.0 256.6C1221.5 249.9 1242.4 242.9 1259.1 237.8C1275.8 232.7 1283.5 231.2 1300.0 225.9C1316.5 220.7 1338.8 213.5 1358.3 206.3C1377.8 199.1 1397.2 190.6 1416.7 182.9C1436.2 175.2 1455.6 167.2 1475.0 160.3C1494.4 153.4 1518.7 145.8 1533.3 141.4C1547.9 137.0 1552.8 136.2 1562.5 134.1C1572.2 132.0 1580.5 129.8 1591.6 128.6C1602.6 127.4 1616.4 126.4 1628.8 126.7C1641.2 127.0 1653.6 128.0 1666.0 130.5C1678.4 133.0 1692.1 136.9 1703.3 141.6C1714.5 146.2 1724.4 152.3 1733.0 158.4C1741.6 164.5 1748.8 171.1 1755.0 178.0C1761.2 184.9 1766.2 192.7 1770.0 200.0C1773.8 207.3 1775.7 211.8 1777.7 221.6C1779.7 231.4 1782.0 246.4 1782.0 258.8C1782.0 271.2 1780.9 284.8 1777.7 296.0C1774.5 307.2 1769.0 317.1 1762.8 325.8C1756.6 334.5 1749.2 341.2 1740.5 348.0C1731.8 354.8 1723.1 359.9 1710.7 366.7C1698.3 373.4 1682.8 381.6 1666.0 388.5C1649.2 395.4 1628.7 401.6 1610.0 408.0C1591.3 414.4 1576.5 418.9 1554.0 427.0C1531.5 435.1 1502.8 446.0 1475.0 456.3C1447.2 466.6 1416.7 477.7 1387.5 489.0C1358.3 500.3 1347.9 504.8 1300.0 524.1C1252.1 543.4 1150.0 584.8 1100.0 604.7C1050.0 624.6 1032.3 630.7 1000.0 643.8C967.7 656.8 937.2 670.3 906.0 682.8C874.8 695.3 843.7 707.0 812.5 718.8C781.3 730.5 744.8 744.1 718.8 753.0C692.7 761.9 676.8 767.3 656.0 772.0C635.2 776.7 614.8 779.5 593.8 781.0C572.8 782.5 549.8 782.5 530.0 781.0C510.2 779.5 492.3 776.2 475.0 772.0C457.7 767.8 442.3 762.3 426.0 755.5C409.7 748.7 392.2 739.8 377.0 731.0C361.8 722.2 347.8 712.9 335.0 703.0C322.2 693.1 310.5 682.0 300.0 671.5C289.5 661.0 279.3 651.1 272.0 640.0C264.7 628.9 259.8 614.9 256.3 605.0C252.8 595.1 253.2 581.1 251.0 580.5C248.8 579.9 243.9 600.9 243.3 601.5Z')"><div class="tex" style="width:2181px;height:1000px;transform:matrix3d(1.0699163,-0.29149386,0,0.00017203134,0.21696847,0.21205398,0,-0.00032156653,0,0,1,0,-98.10844,643.76899,0,1)"><svg width="2181" height="1000"><rect width="2181" height="1000" fill="url(#t_tw)"/></svg></div></div></div><div style="position:absolute;left:0;top:0;width:1920px;height:914px;clip-path:polygon(1407px 0px,1920px 0px,1920px 914px,1733px 914px)"><div class="clip" style="clip-path:path('M243.3 601.5C242.7 602.1 244.5 590.1 247.5 584.0C250.5 577.9 255.7 570.6 261.5 564.8C267.3 559.0 276.1 553.0 282.5 549.0C288.9 545.0 289.8 544.2 300.0 540.8C310.2 537.4 329.2 532.8 343.8 528.8C358.4 524.8 372.9 520.8 387.5 516.8C402.1 512.8 416.7 508.6 431.3 504.5C445.9 500.4 460.4 496.7 475.0 492.5C489.6 488.3 504.2 483.9 518.8 479.5C533.4 475.1 548.0 470.5 562.6 466.0C577.2 461.5 591.7 457.1 606.3 452.3C620.9 447.6 634.5 442.8 650.1 437.5C665.7 432.2 679.8 427.2 700.0 420.4C720.2 413.6 730.1 409.9 771.3 396.5C812.5 383.1 906.2 353.2 947.2 339.8C988.2 326.4 987.0 326.2 1017.5 315.9C1048.0 305.6 1099.6 287.9 1130.0 278.0C1160.4 268.1 1178.5 263.3 1200.0 256.6C1221.5 249.9 1242.4 242.9 1259.1 237.8C1275.8 232.7 1283.5 231.2 1300.0 225.9C1316.5 220.7 1338.8 213.5 1358.3 206.3C1377.8 199.1 1397.2 190.6 1416.7 182.9C1436.2 175.2 1455.6 167.2 1475.0 160.3C1494.4 153.4 1518.7 145.8 1533.3 141.4C1547.9 137.0 1552.8 136.2 1562.5 134.1C1572.2 132.0 1580.5 129.8 1591.6 128.6C1602.6 127.4 1616.4 126.4 1628.8 126.7C1641.2 127.0 1653.6 128.0 1666.0 130.5C1678.4 133.0 1692.1 136.9 1703.3 141.6C1714.5 146.2 1724.4 152.3 1733.0 158.4C1741.6 164.5 1748.8 171.1 1755.0 178.0C1761.2 184.9 1766.2 192.7 1770.0 200.0C1773.8 207.3 1775.7 211.8 1777.7 221.6C1779.7 231.4 1782.0 246.4 1782.0 258.8C1782.0 271.2 1780.9 284.8 1777.7 296.0C1774.5 307.2 1769.0 317.1 1762.8 325.8C1756.6 334.5 1749.2 341.2 1740.5 348.0C1731.8 354.8 1723.1 359.9 1710.7 366.7C1698.3 373.4 1682.8 381.6 1666.0 388.5C1649.2 395.4 1628.7 401.6 1610.0 408.0C1591.3 414.4 1576.5 418.9 1554.0 427.0C1531.5 435.1 1502.8 446.0 1475.0 456.3C1447.2 466.6 1416.7 477.7 1387.5 489.0C1358.3 500.3 1347.9 504.8 1300.0 524.1C1252.1 543.4 1150.0 584.8 1100.0 604.7C1050.0 624.6 1032.3 630.7 1000.0 643.8C967.7 656.8 937.2 670.3 906.0 682.8C874.8 695.3 843.7 707.0 812.5 718.8C781.3 730.5 744.8 744.1 718.8 753.0C692.7 761.9 676.8 767.3 656.0 772.0C635.2 776.7 614.8 779.5 593.8 781.0C572.8 782.5 549.8 782.5 530.0 781.0C510.2 779.5 492.3 776.2 475.0 772.0C457.7 767.8 442.3 762.3 426.0 755.5C409.7 748.7 392.2 739.8 377.0 731.0C361.8 722.2 347.8 712.9 335.0 703.0C322.2 693.1 310.5 682.0 300.0 671.5C289.5 661.0 279.3 651.1 272.0 640.0C264.7 628.9 259.8 614.9 256.3 605.0C252.8 595.1 253.2 581.1 251.0 580.5C248.8 579.9 243.9 600.9 243.3 601.5Z')"><div class="tex" style="width:2181px;height:1000px;transform:matrix3d(1.1054859,-0.32984394,0,0.00017203134,0.23764817,0.19484401,0,-0.00032156653,0,0,1,0,-164.87739,712.80956,0,1)"><svg width="2181" height="1000"><rect width="2181" height="1000" fill="url(#t_tw)"/></svg></div></div></div><div style="position:absolute;left:0;top:0;width:1920px;height:914px;clip-path:polygon(1429px 0px,1920px 0px,1920px 914px,1755px 914px)"><div class="clip" style="clip-path:path('M243.3 601.5C242.7 602.1 244.5 590.1 247.5 584.0C250.5 577.9 255.7 570.6 261.5 564.8C267.3 559.0 276.1 553.0 282.5 549.0C288.9 545.0 289.8 544.2 300.0 540.8C310.2 537.4 329.2 532.8 343.8 528.8C358.4 524.8 372.9 520.8 387.5 516.8C402.1 512.8 416.7 508.6 431.3 504.5C445.9 500.4 460.4 496.7 475.0 492.5C489.6 488.3 504.2 483.9 518.8 479.5C533.4 475.1 548.0 470.5 562.6 466.0C577.2 461.5 591.7 457.1 606.3 452.3C620.9 447.6 634.5 442.8 650.1 437.5C665.7 432.2 679.8 427.2 700.0 420.4C720.2 413.6 730.1 409.9 771.3 396.5C812.5 383.1 906.2 353.2 947.2 339.8C988.2 326.4 987.0 326.2 1017.5 315.9C1048.0 305.6 1099.6 287.9 1130.0 278.0C1160.4 268.1 1178.5 263.3 1200.0 256.6C1221.5 249.9 1242.4 242.9 1259.1 237.8C1275.8 232.7 1283.5 231.2 1300.0 225.9C1316.5 220.7 1338.8 213.5 1358.3 206.3C1377.8 199.1 1397.2 190.6 1416.7 182.9C1436.2 175.2 1455.6 167.2 1475.0 160.3C1494.4 153.4 1518.7 145.8 1533.3 141.4C1547.9 137.0 1552.8 136.2 1562.5 134.1C1572.2 132.0 1580.5 129.8 1591.6 128.6C1602.6 127.4 1616.4 126.4 1628.8 126.7C1641.2 127.0 1653.6 128.0 1666.0 130.5C1678.4 133.0 1692.1 136.9 1703.3 141.6C1714.5 146.2 1724.4 152.3 1733.0 158.4C1741.6 164.5 1748.8 171.1 1755.0 178.0C1761.2 184.9 1766.2 192.7 1770.0 200.0C1773.8 207.3 1775.7 211.8 1777.7 221.6C1779.7 231.4 1782.0 246.4 1782.0 258.8C1782.0 271.2 1780.9 284.8 1777.7 296.0C1774.5 307.2 1769.0 317.1 1762.8 325.8C1756.6 334.5 1749.2 341.2 1740.5 348.0C1731.8 354.8 1723.1 359.9 1710.7 366.7C1698.3 373.4 1682.8 381.6 1666.0 388.5C1649.2 395.4 1628.7 401.6 1610.0 408.0C1591.3 414.4 1576.5 418.9 1554.0 427.0C1531.5 435.1 1502.8 446.0 1475.0 456.3C1447.2 466.6 1416.7 477.7 1387.5 489.0C1358.3 500.3 1347.9 504.8 1300.0 524.1C1252.1 543.4 1150.0 584.8 1100.0 604.7C1050.0 624.6 1032.3 630.7 1000.0 643.8C967.7 656.8 937.2 670.3 906.0 682.8C874.8 695.3 843.7 707.0 812.5 718.8C781.3 730.5 744.8 744.1 718.8 753.0C692.7 761.9 676.8 767.3 656.0 772.0C635.2 776.7 614.8 779.5 593.8 781.0C572.8 782.5 549.8 782.5 530.0 781.0C510.2 779.5 492.3 776.2 475.0 772.0C457.7 767.8 442.3 762.3 426.0 755.5C409.7 748.7 392.2 739.8 377.0 731.0C361.8 722.2 347.8 712.9 335.0 703.0C322.2 693.1 310.5 682.0 300.0 671.5C289.5 661.0 279.3 651.1 272.0 640.0C264.7 628.9 259.8 614.9 256.3 605.0C252.8 595.1 253.2 581.1 251.0 580.5C248.8 579.9 243.9 600.9 243.3 601.5Z')"><div class="tex" style="width:2181px;height:1000px;transform:matrix3d(1.1407443,-0.36788241,0,0.00017203134,0.25890942,0.17705157,0,-0.00032156653,0,0,1,0,-233.45486,783.66148,0,1)"><svg width="2181" height="1000"><rect width="2181" height="1000" fill="url(#t_tw)"/></svg></div></div></div><div style="position:absolute;left:0;top:0;width:1920px;height:914px;clip-path:polygon(1451px 0px,1920px 0px,1920px 914px,1777px 914px)"><div class="clip" style="clip-path:path('M243.3 601.5C242.7 602.1 244.5 590.1 247.5 584.0C250.5 577.9 255.7 570.6 261.5 564.8C267.3 559.0 276.1 553.0 282.5 549.0C288.9 545.0 289.8 544.2 300.0 540.8C310.2 537.4 329.2 532.8 343.8 528.8C358.4 524.8 372.9 520.8 387.5 516.8C402.1 512.8 416.7 508.6 431.3 504.5C445.9 500.4 460.4 496.7 475.0 492.5C489.6 488.3 504.2 483.9 518.8 479.5C533.4 475.1 548.0 470.5 562.6 466.0C577.2 461.5 591.7 457.1 606.3 452.3C620.9 447.6 634.5 442.8 650.1 437.5C665.7 432.2 679.8 427.2 700.0 420.4C720.2 413.6 730.1 409.9 771.3 396.5C812.5 383.1 906.2 353.2 947.2 339.8C988.2 326.4 987.0 326.2 1017.5 315.9C1048.0 305.6 1099.6 287.9 1130.0 278.0C1160.4 268.1 1178.5 263.3 1200.0 256.6C1221.5 249.9 1242.4 242.9 1259.1 237.8C1275.8 232.7 1283.5 231.2 1300.0 225.9C1316.5 220.7 1338.8 213.5 1358.3 206.3C1377.8 199.1 1397.2 190.6 1416.7 182.9C1436.2 175.2 1455.6 167.2 1475.0 160.3C1494.4 153.4 1518.7 145.8 1533.3 141.4C1547.9 137.0 1552.8 136.2 1562.5 134.1C1572.2 132.0 1580.5 129.8 1591.6 128.6C1602.6 127.4 1616.4 126.4 1628.8 126.7C1641.2 127.0 1653.6 128.0 1666.0 130.5C1678.4 133.0 1692.1 136.9 1703.3 141.6C1714.5 146.2 1724.4 152.3 1733.0 158.4C1741.6 164.5 1748.8 171.1 1755.0 178.0C1761.2 184.9 1766.2 192.7 1770.0 200.0C1773.8 207.3 1775.7 211.8 1777.7 221.6C1779.7 231.4 1782.0 246.4 1782.0 258.8C1782.0 271.2 1780.9 284.8 1777.7 296.0C1774.5 307.2 1769.0 317.1 1762.8 325.8C1756.6 334.5 1749.2 341.2 1740.5 348.0C1731.8 354.8 1723.1 359.9 1710.7 366.7C1698.3 373.4 1682.8 381.6 1666.0 388.5C1649.2 395.4 1628.7 401.6 1610.0 408.0C1591.3 414.4 1576.5 418.9 1554.0 427.0C1531.5 435.1 1502.8 446.0 1475.0 456.3C1447.2 466.6 1416.7 477.7 1387.5 489.0C1358.3 500.3 1347.9 504.8 1300.0 524.1C1252.1 543.4 1150.0 584.8 1100.0 604.7C1050.0 624.6 1032.3 630.7 1000.0 643.8C967.7 656.8 937.2 670.3 906.0 682.8C874.8 695.3 843.7 707.0 812.5 718.8C781.3 730.5 744.8 744.1 718.8 753.0C692.7 761.9 676.8 767.3 656.0 772.0C635.2 776.7 614.8 779.5 593.8 781.0C572.8 782.5 549.8 782.5 530.0 781.0C510.2 779.5 492.3 776.2 475.0 772.0C457.7 767.8 442.3 762.3 426.0 755.5C409.7 748.7 392.2 739.8 377.0 731.0C361.8 722.2 347.8 712.9 335.0 703.0C322.2 693.1 310.5 682.0 300.0 671.5C289.5 661.0 279.3 651.1 272.0 640.0C264.7 628.9 259.8 614.9 256.3 605.0C252.8 595.1 253.2 581.1 251.0 580.5C248.8 579.9 243.9 600.9 243.3 601.5Z')"><div class="tex" style="width:2181px;height:1000px;transform:matrix3d(1.1756915,-0.40560928,0,0.00017203134,0.28075224,0.15867665,0,-0.00032156653,0,0,1,0,-303.84086,856.32477,0,1)"><svg width="2181" height="1000"><rect width="2181" height="1000" fill="url(#t_tw)"/></svg></div></div></div><div style="position:absolute;left:0;top:0;width:1920px;height:914px;clip-path:polygon(0px 0px,220px 0px,1036px 914px,0px 914px)"><div class="clip" style="clip-path:path('M243.3 601.5C242.7 602.1 244.5 590.1 247.5 584.0C250.5 577.9 255.7 570.6 261.5 564.8C267.3 559.0 276.1 553.0 282.5 549.0C288.9 545.0 289.8 544.2 300.0 540.8C310.2 537.4 329.2 532.8 343.8 528.8C358.4 524.8 372.9 520.8 387.5 516.8C402.1 512.8 416.7 508.6 431.3 504.5C445.9 500.4 460.4 496.7 475.0 492.5C489.6 488.3 504.2 483.9 518.8 479.5C533.4 475.1 548.0 470.5 562.6 466.0C577.2 461.5 591.7 457.1 606.3 452.3C620.9 447.6 634.5 442.8 650.1 437.5C665.7 432.2 679.8 427.2 700.0 420.4C720.2 413.6 730.1 409.9 771.3 396.5C812.5 383.1 906.2 353.2 947.2 339.8C988.2 326.4 987.0 326.2 1017.5 315.9C1048.0 305.6 1099.6 287.9 1130.0 278.0C1160.4 268.1 1178.5 263.3 1200.0 256.6C1221.5 249.9 1242.4 242.9 1259.1 237.8C1275.8 232.7 1283.5 231.2 1300.0 225.9C1316.5 220.7 1338.8 213.5 1358.3 206.3C1377.8 199.1 1397.2 190.6 1416.7 182.9C1436.2 175.2 1455.6 167.2 1475.0 160.3C1494.4 153.4 1518.7 145.8 1533.3 141.4C1547.9 137.0 1552.8 136.2 1562.5 134.1C1572.2 132.0 1580.5 129.8 1591.6 128.6C1602.6 127.4 1616.4 126.4 1628.8 126.7C1641.2 127.0 1653.6 128.0 1666.0 130.5C1678.4 133.0 1692.1 136.9 1703.3 141.6C1714.5 146.2 1724.4 152.3 1733.0 158.4C1741.6 164.5 1748.8 171.1 1755.0 178.0C1761.2 184.9 1766.2 192.7 1770.0 200.0C1773.8 207.3 1775.7 211.8 1777.7 221.6C1779.7 231.4 1782.0 246.4 1782.0 258.8C1782.0 271.2 1780.9 284.8 1777.7 296.0C1774.5 307.2 1769.0 317.1 1762.8 325.8C1756.6 334.5 1749.2 341.2 1740.5 348.0C1731.8 354.8 1723.1 359.9 1710.7 366.7C1698.3 373.4 1682.8 381.6 1666.0 388.5C1649.2 395.4 1628.7 401.6 1610.0 408.0C1591.3 414.4 1576.5 418.9 1554.0 427.0C1531.5 435.1 1502.8 446.0 1475.0 456.3C1447.2 466.6 1416.7 477.7 1387.5 489.0C1358.3 500.3 1347.9 504.8 1300.0 524.1C1252.1 543.4 1150.0 584.8 1100.0 604.7C1050.0 624.6 1032.3 630.7 1000.0 643.8C967.7 656.8 937.2 670.3 906.0 682.8C874.8 695.3 843.7 707.0 812.5 718.8C781.3 730.5 744.8 744.1 718.8 753.0C692.7 761.9 676.8 767.3 656.0 772.0C635.2 776.7 614.8 779.5 593.8 781.0C572.8 782.5 549.8 782.5 530.0 781.0C510.2 779.5 492.3 776.2 475.0 772.0C457.7 767.8 442.3 762.3 426.0 755.5C409.7 748.7 392.2 739.8 377.0 731.0C361.8 722.2 347.8 712.9 335.0 703.0C322.2 693.1 310.5 682.0 300.0 671.5C289.5 661.0 279.3 651.1 272.0 640.0C264.7 628.9 259.8 614.9 256.3 605.0C252.8 595.1 253.2 581.1 251.0 580.5C248.8 579.9 243.9 600.9 243.3 601.5Z')"><div class="tex" style="width:2181px;height:1000px;transform:matrix3d(1.0038375,-0.16942453,0,0.00017203134,0.1928845,0.24086043,0,-0.00032156653,0,0,1,0,19.512349,494.19239,0,1)"><svg width="2181" height="1000"><rect width="2181" height="1000" fill="url(#t_tw)"/></svg></div></div></div><div style="position:absolute;left:0;top:0;width:1920px;height:914px;clip-path:polygon(0px 0px,195px 0px,1011px 914px,0px 914px)"><div class="clip" style="clip-path:path('M243.3 601.5C242.7 602.1 244.5 590.1 247.5 584.0C250.5 577.9 255.7 570.6 261.5 564.8C267.3 559.0 276.1 553.0 282.5 549.0C288.9 545.0 289.8 544.2 300.0 540.8C310.2 537.4 329.2 532.8 343.8 528.8C358.4 524.8 372.9 520.8 387.5 516.8C402.1 512.8 416.7 508.6 431.3 504.5C445.9 500.4 460.4 496.7 475.0 492.5C489.6 488.3 504.2 483.9 518.8 479.5C533.4 475.1 548.0 470.5 562.6 466.0C577.2 461.5 591.7 457.1 606.3 452.3C620.9 447.6 634.5 442.8 650.1 437.5C665.7 432.2 679.8 427.2 700.0 420.4C720.2 413.6 730.1 409.9 771.3 396.5C812.5 383.1 906.2 353.2 947.2 339.8C988.2 326.4 987.0 326.2 1017.5 315.9C1048.0 305.6 1099.6 287.9 1130.0 278.0C1160.4 268.1 1178.5 263.3 1200.0 256.6C1221.5 249.9 1242.4 242.9 1259.1 237.8C1275.8 232.7 1283.5 231.2 1300.0 225.9C1316.5 220.7 1338.8 213.5 1358.3 206.3C1377.8 199.1 1397.2 190.6 1416.7 182.9C1436.2 175.2 1455.6 167.2 1475.0 160.3C1494.4 153.4 1518.7 145.8 1533.3 141.4C1547.9 137.0 1552.8 136.2 1562.5 134.1C1572.2 132.0 1580.5 129.8 1591.6 128.6C1602.6 127.4 1616.4 126.4 1628.8 126.7C1641.2 127.0 1653.6 128.0 1666.0 130.5C1678.4 133.0 1692.1 136.9 1703.3 141.6C1714.5 146.2 1724.4 152.3 1733.0 158.4C1741.6 164.5 1748.8 171.1 1755.0 178.0C1761.2 184.9 1766.2 192.7 1770.0 200.0C1773.8 207.3 1775.7 211.8 1777.7 221.6C1779.7 231.4 1782.0 246.4 1782.0 258.8C1782.0 271.2 1780.9 284.8 1777.7 296.0C1774.5 307.2 1769.0 317.1 1762.8 325.8C1756.6 334.5 1749.2 341.2 1740.5 348.0C1731.8 354.8 1723.1 359.9 1710.7 366.7C1698.3 373.4 1682.8 381.6 1666.0 388.5C1649.2 395.4 1628.7 401.6 1610.0 408.0C1591.3 414.4 1576.5 418.9 1554.0 427.0C1531.5 435.1 1502.8 446.0 1475.0 456.3C1447.2 466.6 1416.7 477.7 1387.5 489.0C1358.3 500.3 1347.9 504.8 1300.0 524.1C1252.1 543.4 1150.0 584.8 1100.0 604.7C1050.0 624.6 1032.3 630.7 1000.0 643.8C967.7 656.8 937.2 670.3 906.0 682.8C874.8 695.3 843.7 707.0 812.5 718.8C781.3 730.5 744.8 744.1 718.8 753.0C692.7 761.9 676.8 767.3 656.0 772.0C635.2 776.7 614.8 779.5 593.8 781.0C572.8 782.5 549.8 782.5 530.0 781.0C510.2 779.5 492.3 776.2 475.0 772.0C457.7 767.8 442.3 762.3 426.0 755.5C409.7 748.7 392.2 739.8 377.0 731.0C361.8 722.2 347.8 712.9 335.0 703.0C322.2 693.1 310.5 682.0 300.0 671.5C289.5 661.0 279.3 651.1 272.0 640.0C264.7 628.9 259.8 614.9 256.3 605.0C252.8 595.1 253.2 581.1 251.0 580.5C248.8 579.9 243.9 600.9 243.3 601.5Z')"><div class="tex" style="width:2181px;height:1000px;transform:matrix3d(1.0099587,-0.12468225,0,0.00017203134,0.2081768,0.23641872,0,-0.00032156653,0,0,1,0,9.7622969,479.05294,0,1)"><svg width="2181" height="1000"><rect width="2181" height="1000" fill="url(#t_tw)"/></svg></div></div></div><div style="position:absolute;left:0;top:0;width:1920px;height:914px;clip-path:polygon(0px 0px,170px 0px,986px 914px,0px 914px)"><div class="clip" style="clip-path:path('M243.3 601.5C242.7 602.1 244.5 590.1 247.5 584.0C250.5 577.9 255.7 570.6 261.5 564.8C267.3 559.0 276.1 553.0 282.5 549.0C288.9 545.0 289.8 544.2 300.0 540.8C310.2 537.4 329.2 532.8 343.8 528.8C358.4 524.8 372.9 520.8 387.5 516.8C402.1 512.8 416.7 508.6 431.3 504.5C445.9 500.4 460.4 496.7 475.0 492.5C489.6 488.3 504.2 483.9 518.8 479.5C533.4 475.1 548.0 470.5 562.6 466.0C577.2 461.5 591.7 457.1 606.3 452.3C620.9 447.6 634.5 442.8 650.1 437.5C665.7 432.2 679.8 427.2 700.0 420.4C720.2 413.6 730.1 409.9 771.3 396.5C812.5 383.1 906.2 353.2 947.2 339.8C988.2 326.4 987.0 326.2 1017.5 315.9C1048.0 305.6 1099.6 287.9 1130.0 278.0C1160.4 268.1 1178.5 263.3 1200.0 256.6C1221.5 249.9 1242.4 242.9 1259.1 237.8C1275.8 232.7 1283.5 231.2 1300.0 225.9C1316.5 220.7 1338.8 213.5 1358.3 206.3C1377.8 199.1 1397.2 190.6 1416.7 182.9C1436.2 175.2 1455.6 167.2 1475.0 160.3C1494.4 153.4 1518.7 145.8 1533.3 141.4C1547.9 137.0 1552.8 136.2 1562.5 134.1C1572.2 132.0 1580.5 129.8 1591.6 128.6C1602.6 127.4 1616.4 126.4 1628.8 126.7C1641.2 127.0 1653.6 128.0 1666.0 130.5C1678.4 133.0 1692.1 136.9 1703.3 141.6C1714.5 146.2 1724.4 152.3 1733.0 158.4C1741.6 164.5 1748.8 171.1 1755.0 178.0C1761.2 184.9 1766.2 192.7 1770.0 200.0C1773.8 207.3 1775.7 211.8 1777.7 221.6C1779.7 231.4 1782.0 246.4 1782.0 258.8C1782.0 271.2 1780.9 284.8 1777.7 296.0C1774.5 307.2 1769.0 317.1 1762.8 325.8C1756.6 334.5 1749.2 341.2 1740.5 348.0C1731.8 354.8 1723.1 359.9 1710.7 366.7C1698.3 373.4 1682.8 381.6 1666.0 388.5C1649.2 395.4 1628.7 401.6 1610.0 408.0C1591.3 414.4 1576.5 418.9 1554.0 427.0C1531.5 435.1 1502.8 446.0 1475.0 456.3C1447.2 466.6 1416.7 477.7 1387.5 489.0C1358.3 500.3 1347.9 504.8 1300.0 524.1C1252.1 543.4 1150.0 584.8 1100.0 604.7C1050.0 624.6 1032.3 630.7 1000.0 643.8C967.7 656.8 937.2 670.3 906.0 682.8C874.8 695.3 843.7 707.0 812.5 718.8C781.3 730.5 744.8 744.1 718.8 753.0C692.7 761.9 676.8 767.3 656.0 772.0C635.2 776.7 614.8 779.5 593.8 781.0C572.8 782.5 549.8 782.5 530.0 781.0C510.2 779.5 492.3 776.2 475.0 772.0C457.7 767.8 442.3 762.3 426.0 755.5C409.7 748.7 392.2 739.8 377.0 731.0C361.8 722.2 347.8 712.9 335.0 703.0C322.2 693.1 310.5 682.0 300.0 671.5C289.5 661.0 279.3 651.1 272.0 640.0C264.7 628.9 259.8 614.9 256.3 605.0C252.8 595.1 253.2 581.1 251.0 580.5C248.8 579.9 243.9 600.9 243.3 601.5Z')"><div class="tex" style="width:2181px;height:1000px;transform:matrix3d(1.0162074,-0.079632009,0,0.00017203134,0.22323066,0.23140139,0,-0.00032156653,0,0,1,0,0.75372346,465.70356,0,1)"><svg width="2181" height="1000"><rect width="2181" height="1000" fill="url(#t_tw)"/></svg></div></div></div><div style="position:absolute;left:0;top:0;width:1920px;height:914px;clip-path:polygon(0px 0px,145px 0px,961px 914px,0px 914px)"><div class="clip" style="clip-path:path('M243.3 601.5C242.7 602.1 244.5 590.1 247.5 584.0C250.5 577.9 255.7 570.6 261.5 564.8C267.3 559.0 276.1 553.0 282.5 549.0C288.9 545.0 289.8 544.2 300.0 540.8C310.2 537.4 329.2 532.8 343.8 528.8C358.4 524.8 372.9 520.8 387.5 516.8C402.1 512.8 416.7 508.6 431.3 504.5C445.9 500.4 460.4 496.7 475.0 492.5C489.6 488.3 504.2 483.9 518.8 479.5C533.4 475.1 548.0 470.5 562.6 466.0C577.2 461.5 591.7 457.1 606.3 452.3C620.9 447.6 634.5 442.8 650.1 437.5C665.7 432.2 679.8 427.2 700.0 420.4C720.2 413.6 730.1 409.9 771.3 396.5C812.5 383.1 906.2 353.2 947.2 339.8C988.2 326.4 987.0 326.2 1017.5 315.9C1048.0 305.6 1099.6 287.9 1130.0 278.0C1160.4 268.1 1178.5 263.3 1200.0 256.6C1221.5 249.9 1242.4 242.9 1259.1 237.8C1275.8 232.7 1283.5 231.2 1300.0 225.9C1316.5 220.7 1338.8 213.5 1358.3 206.3C1377.8 199.1 1397.2 190.6 1416.7 182.9C1436.2 175.2 1455.6 167.2 1475.0 160.3C1494.4 153.4 1518.7 145.8 1533.3 141.4C1547.9 137.0 1552.8 136.2 1562.5 134.1C1572.2 132.0 1580.5 129.8 1591.6 128.6C1602.6 127.4 1616.4 126.4 1628.8 126.7C1641.2 127.0 1653.6 128.0 1666.0 130.5C1678.4 133.0 1692.1 136.9 1703.3 141.6C1714.5 146.2 1724.4 152.3 1733.0 158.4C1741.6 164.5 1748.8 171.1 1755.0 178.0C1761.2 184.9 1766.2 192.7 1770.0 200.0C1773.8 207.3 1775.7 211.8 1777.7 221.6C1779.7 231.4 1782.0 246.4 1782.0 258.8C1782.0 271.2 1780.9 284.8 1777.7 296.0C1774.5 307.2 1769.0 317.1 1762.8 325.8C1756.6 334.5 1749.2 341.2 1740.5 348.0C1731.8 354.8 1723.1 359.9 1710.7 366.7C1698.3 373.4 1682.8 381.6 1666.0 388.5C1649.2 395.4 1628.7 401.6 1610.0 408.0C1591.3 414.4 1576.5 418.9 1554.0 427.0C1531.5 435.1 1502.8 446.0 1475.0 456.3C1447.2 466.6 1416.7 477.7 1387.5 489.0C1358.3 500.3 1347.9 504.8 1300.0 524.1C1252.1 543.4 1150.0 584.8 1100.0 604.7C1050.0 624.6 1032.3 630.7 1000.0 643.8C967.7 656.8 937.2 670.3 906.0 682.8C874.8 695.3 843.7 707.0 812.5 718.8C781.3 730.5 744.8 744.1 718.8 753.0C692.7 761.9 676.8 767.3 656.0 772.0C635.2 776.7 614.8 779.5 593.8 781.0C572.8 782.5 549.8 782.5 530.0 781.0C510.2 779.5 492.3 776.2 475.0 772.0C457.7 767.8 442.3 762.3 426.0 755.5C409.7 748.7 392.2 739.8 377.0 731.0C361.8 722.2 347.8 712.9 335.0 703.0C322.2 693.1 310.5 682.0 300.0 671.5C289.5 661.0 279.3 651.1 272.0 640.0C264.7 628.9 259.8 614.9 256.3 605.0C252.8 595.1 253.2 581.1 251.0 580.5C248.8 579.9 243.9 600.9 243.3 601.5Z')"><div class="tex" style="width:2181px;height:1000px;transform:matrix3d(1.0225837,-0.034273824,0,0.00017203134,0.23804609,0.22580842,0,-0.00032156653,0,0,1,0,-7.5133716,454.14427,0,1)"><svg width="2181" height="1000"><rect width="2181" height="1000" fill="url(#t_tw)"/></svg></div></div></div><div style="position:absolute;left:0;top:0;width:1920px;height:914px;clip-path:polygon(0px 0px,120px 0px,936px 914px,0px 914px)"><div class="clip" style="clip-path:path('M243.3 601.5C242.7 602.1 244.5 590.1 247.5 584.0C250.5 577.9 255.7 570.6 261.5 564.8C267.3 559.0 276.1 553.0 282.5 549.0C288.9 545.0 289.8 544.2 300.0 540.8C310.2 537.4 329.2 532.8 343.8 528.8C358.4 524.8 372.9 520.8 387.5 516.8C402.1 512.8 416.7 508.6 431.3 504.5C445.9 500.4 460.4 496.7 475.0 492.5C489.6 488.3 504.2 483.9 518.8 479.5C533.4 475.1 548.0 470.5 562.6 466.0C577.2 461.5 591.7 457.1 606.3 452.3C620.9 447.6 634.5 442.8 650.1 437.5C665.7 432.2 679.8 427.2 700.0 420.4C720.2 413.6 730.1 409.9 771.3 396.5C812.5 383.1 906.2 353.2 947.2 339.8C988.2 326.4 987.0 326.2 1017.5 315.9C1048.0 305.6 1099.6 287.9 1130.0 278.0C1160.4 268.1 1178.5 263.3 1200.0 256.6C1221.5 249.9 1242.4 242.9 1259.1 237.8C1275.8 232.7 1283.5 231.2 1300.0 225.9C1316.5 220.7 1338.8 213.5 1358.3 206.3C1377.8 199.1 1397.2 190.6 1416.7 182.9C1436.2 175.2 1455.6 167.2 1475.0 160.3C1494.4 153.4 1518.7 145.8 1533.3 141.4C1547.9 137.0 1552.8 136.2 1562.5 134.1C1572.2 132.0 1580.5 129.8 1591.6 128.6C1602.6 127.4 1616.4 126.4 1628.8 126.7C1641.2 127.0 1653.6 128.0 1666.0 130.5C1678.4 133.0 1692.1 136.9 1703.3 141.6C1714.5 146.2 1724.4 152.3 1733.0 158.4C1741.6 164.5 1748.8 171.1 1755.0 178.0C1761.2 184.9 1766.2 192.7 1770.0 200.0C1773.8 207.3 1775.7 211.8 1777.7 221.6C1779.7 231.4 1782.0 246.4 1782.0 258.8C1782.0 271.2 1780.9 284.8 1777.7 296.0C1774.5 307.2 1769.0 317.1 1762.8 325.8C1756.6 334.5 1749.2 341.2 1740.5 348.0C1731.8 354.8 1723.1 359.9 1710.7 366.7C1698.3 373.4 1682.8 381.6 1666.0 388.5C1649.2 395.4 1628.7 401.6 1610.0 408.0C1591.3 414.4 1576.5 418.9 1554.0 427.0C1531.5 435.1 1502.8 446.0 1475.0 456.3C1447.2 466.6 1416.7 477.7 1387.5 489.0C1358.3 500.3 1347.9 504.8 1300.0 524.1C1252.1 543.4 1150.0 584.8 1100.0 604.7C1050.0 624.6 1032.3 630.7 1000.0 643.8C967.7 656.8 937.2 670.3 906.0 682.8C874.8 695.3 843.7 707.0 812.5 718.8C781.3 730.5 744.8 744.1 718.8 753.0C692.7 761.9 676.8 767.3 656.0 772.0C635.2 776.7 614.8 779.5 593.8 781.0C572.8 782.5 549.8 782.5 530.0 781.0C510.2 779.5 492.3 776.2 475.0 772.0C457.7 767.8 442.3 762.3 426.0 755.5C409.7 748.7 392.2 739.8 377.0 731.0C361.8 722.2 347.8 712.9 335.0 703.0C322.2 693.1 310.5 682.0 300.0 671.5C289.5 661.0 279.3 651.1 272.0 640.0C264.7 628.9 259.8 614.9 256.3 605.0C252.8 595.1 253.2 581.1 251.0 580.5C248.8 579.9 243.9 600.9 243.3 601.5Z')"><div class="tex" style="width:2181px;height:1000px;transform:matrix3d(1.0290875,0.011392313,0,0.00017203134,0.25262308,0.21963982,0,-0.00032156653,0,0,1,0,-15.038988,444.37506,0,1)"><svg width="2181" height="1000"><rect width="2181" height="1000" fill="url(#t_tw)"/></svg></div></div></div><div style="position:absolute;left:0;top:0;width:470px;height:914px;overflow:hidden"><div style="position:absolute;left:0;top:0;width:1920px;height:914px;clip-path:path('M243.3 601.5C242.7 602.1 244.5 590.1 247.5 584.0C250.5 577.9 255.7 570.6 261.5 564.8C267.3 559.0 276.1 553.0 282.5 549.0C288.9 545.0 289.8 544.2 300.0 540.8C310.2 537.4 329.2 532.8 343.8 528.8C358.4 524.8 372.9 520.8 387.5 516.8C402.1 512.8 416.7 508.6 431.3 504.5C445.9 500.4 460.4 496.7 475.0 492.5C489.6 488.3 504.2 483.9 518.8 479.5C533.4 475.1 548.0 470.5 562.6 466.0C577.2 461.5 591.7 457.1 606.3 452.3C620.9 447.6 634.5 442.8 650.1 437.5C665.7 432.2 679.8 427.2 700.0 420.4C720.2 413.6 730.1 409.9 771.3 396.5C812.5 383.1 906.2 353.2 947.2 339.8C988.2 326.4 987.0 326.2 1017.5 315.9C1048.0 305.6 1099.6 287.9 1130.0 278.0C1160.4 268.1 1178.5 263.3 1200.0 256.6C1221.5 249.9 1242.4 242.9 1259.1 237.8C1275.8 232.7 1283.5 231.2 1300.0 225.9C1316.5 220.7 1338.8 213.5 1358.3 206.3C1377.8 199.1 1397.2 190.6 1416.7 182.9C1436.2 175.2 1455.6 167.2 1475.0 160.3C1494.4 153.4 1518.7 145.8 1533.3 141.4C1547.9 137.0 1552.8 136.2 1562.5 134.1C1572.2 132.0 1580.5 129.8 1591.6 128.6C1602.6 127.4 1616.4 126.4 1628.8 126.7C1641.2 127.0 1653.6 128.0 1666.0 130.5C1678.4 133.0 1692.1 136.9 1703.3 141.6C1714.5 146.2 1724.4 152.3 1733.0 158.4C1741.6 164.5 1748.8 171.1 1755.0 178.0C1761.2 184.9 1766.2 192.7 1770.0 200.0C1773.8 207.3 1775.7 211.8 1777.7 221.6C1779.7 231.4 1782.0 246.4 1782.0 258.8C1782.0 271.2 1780.9 284.8 1777.7 296.0C1774.5 307.2 1769.0 317.1 1762.8 325.8C1756.6 334.5 1749.2 341.2 1740.5 348.0C1731.8 354.8 1723.1 359.9 1710.7 366.7C1698.3 373.4 1682.8 381.6 1666.0 388.5C1649.2 395.4 1628.7 401.6 1610.0 408.0C1591.3 414.4 1576.5 418.9 1554.0 427.0C1531.5 435.1 1502.8 446.0 1475.0 456.3C1447.2 466.6 1416.7 477.7 1387.5 489.0C1358.3 500.3 1347.9 504.8 1300.0 524.1C1252.1 543.4 1150.0 584.8 1100.0 604.7C1050.0 624.6 1032.3 630.7 1000.0 643.8C967.7 656.8 937.2 670.3 906.0 682.8C874.8 695.3 843.7 707.0 812.5 718.8C781.3 730.5 744.8 744.1 718.8 753.0C692.7 761.9 676.8 767.3 656.0 772.0C635.2 776.7 614.8 779.5 593.8 781.0C572.8 782.5 549.8 782.5 530.0 781.0C510.2 779.5 492.3 776.2 475.0 772.0C457.7 767.8 442.3 762.3 426.0 755.5C409.7 748.7 392.2 739.8 377.0 731.0C361.8 722.2 347.8 712.9 335.0 703.0C322.2 693.1 310.5 682.0 300.0 671.5C289.5 661.0 279.3 651.1 272.0 640.0C264.7 628.9 259.8 614.9 256.3 605.0C252.8 595.1 253.2 581.1 251.0 580.5C248.8 579.9 243.9 600.9 243.3 601.5Z');backdrop-filter:blur(1.3px)"></div></div><div style="position:absolute;left:0;top:0;width:560px;height:914px;overflow:hidden"><div style="position:absolute;left:0;top:0;width:1920px;height:914px;clip-path:path('M243.3 601.5C242.7 602.1 244.5 590.1 247.5 584.0C250.5 577.9 255.7 570.6 261.5 564.8C267.3 559.0 276.1 553.0 282.5 549.0C288.9 545.0 289.8 544.2 300.0 540.8C310.2 537.4 329.2 532.8 343.8 528.8C358.4 524.8 372.9 520.8 387.5 516.8C402.1 512.8 416.7 508.6 431.3 504.5C445.9 500.4 460.4 496.7 475.0 492.5C489.6 488.3 504.2 483.9 518.8 479.5C533.4 475.1 548.0 470.5 562.6 466.0C577.2 461.5 591.7 457.1 606.3 452.3C620.9 447.6 634.5 442.8 650.1 437.5C665.7 432.2 679.8 427.2 700.0 420.4C720.2 413.6 730.1 409.9 771.3 396.5C812.5 383.1 906.2 353.2 947.2 339.8C988.2 326.4 987.0 326.2 1017.5 315.9C1048.0 305.6 1099.6 287.9 1130.0 278.0C1160.4 268.1 1178.5 263.3 1200.0 256.6C1221.5 249.9 1242.4 242.9 1259.1 237.8C1275.8 232.7 1283.5 231.2 1300.0 225.9C1316.5 220.7 1338.8 213.5 1358.3 206.3C1377.8 199.1 1397.2 190.6 1416.7 182.9C1436.2 175.2 1455.6 167.2 1475.0 160.3C1494.4 153.4 1518.7 145.8 1533.3 141.4C1547.9 137.0 1552.8 136.2 1562.5 134.1C1572.2 132.0 1580.5 129.8 1591.6 128.6C1602.6 127.4 1616.4 126.4 1628.8 126.7C1641.2 127.0 1653.6 128.0 1666.0 130.5C1678.4 133.0 1692.1 136.9 1703.3 141.6C1714.5 146.2 1724.4 152.3 1733.0 158.4C1741.6 164.5 1748.8 171.1 1755.0 178.0C1761.2 184.9 1766.2 192.7 1770.0 200.0C1773.8 207.3 1775.7 211.8 1777.7 221.6C1779.7 231.4 1782.0 246.4 1782.0 258.8C1782.0 271.2 1780.9 284.8 1777.7 296.0C1774.5 307.2 1769.0 317.1 1762.8 325.8C1756.6 334.5 1749.2 341.2 1740.5 348.0C1731.8 354.8 1723.1 359.9 1710.7 366.7C1698.3 373.4 1682.8 381.6 1666.0 388.5C1649.2 395.4 1628.7 401.6 1610.0 408.0C1591.3 414.4 1576.5 418.9 1554.0 427.0C1531.5 435.1 1502.8 446.0 1475.0 456.3C1447.2 466.6 1416.7 477.7 1387.5 489.0C1358.3 500.3 1347.9 504.8 1300.0 524.1C1252.1 543.4 1150.0 584.8 1100.0 604.7C1050.0 624.6 1032.3 630.7 1000.0 643.8C967.7 656.8 937.2 670.3 906.0 682.8C874.8 695.3 843.7 707.0 812.5 718.8C781.3 730.5 744.8 744.1 718.8 753.0C692.7 761.9 676.8 767.3 656.0 772.0C635.2 776.7 614.8 779.5 593.8 781.0C572.8 782.5 549.8 782.5 530.0 781.0C510.2 779.5 492.3 776.2 475.0 772.0C457.7 767.8 442.3 762.3 426.0 755.5C409.7 748.7 392.2 739.8 377.0 731.0C361.8 722.2 347.8 712.9 335.0 703.0C322.2 693.1 310.5 682.0 300.0 671.5C289.5 661.0 279.3 651.1 272.0 640.0C264.7 628.9 259.8 614.9 256.3 605.0C252.8 595.1 253.2 581.1 251.0 580.5C248.8 579.9 243.9 600.9 243.3 601.5Z');backdrop-filter:blur(0.9px)"></div></div><div style="position:absolute;left:0;top:0;width:640px;height:914px;overflow:hidden"><div style="position:absolute;left:0;top:0;width:1920px;height:914px;clip-path:path('M243.3 601.5C242.7 602.1 244.5 590.1 247.5 584.0C250.5 577.9 255.7 570.6 261.5 564.8C267.3 559.0 276.1 553.0 282.5 549.0C288.9 545.0 289.8 544.2 300.0 540.8C310.2 537.4 329.2 532.8 343.8 528.8C358.4 524.8 372.9 520.8 387.5 516.8C402.1 512.8 416.7 508.6 431.3 504.5C445.9 500.4 460.4 496.7 475.0 492.5C489.6 488.3 504.2 483.9 518.8 479.5C533.4 475.1 548.0 470.5 562.6 466.0C577.2 461.5 591.7 457.1 606.3 452.3C620.9 447.6 634.5 442.8 650.1 437.5C665.7 432.2 679.8 427.2 700.0 420.4C720.2 413.6 730.1 409.9 771.3 396.5C812.5 383.1 906.2 353.2 947.2 339.8C988.2 326.4 987.0 326.2 1017.5 315.9C1048.0 305.6 1099.6 287.9 1130.0 278.0C1160.4 268.1 1178.5 263.3 1200.0 256.6C1221.5 249.9 1242.4 242.9 1259.1 237.8C1275.8 232.7 1283.5 231.2 1300.0 225.9C1316.5 220.7 1338.8 213.5 1358.3 206.3C1377.8 199.1 1397.2 190.6 1416.7 182.9C1436.2 175.2 1455.6 167.2 1475.0 160.3C1494.4 153.4 1518.7 145.8 1533.3 141.4C1547.9 137.0 1552.8 136.2 1562.5 134.1C1572.2 132.0 1580.5 129.8 1591.6 128.6C1602.6 127.4 1616.4 126.4 1628.8 126.7C1641.2 127.0 1653.6 128.0 1666.0 130.5C1678.4 133.0 1692.1 136.9 1703.3 141.6C1714.5 146.2 1724.4 152.3 1733.0 158.4C1741.6 164.5 1748.8 171.1 1755.0 178.0C1761.2 184.9 1766.2 192.7 1770.0 200.0C1773.8 207.3 1775.7 211.8 1777.7 221.6C1779.7 231.4 1782.0 246.4 1782.0 258.8C1782.0 271.2 1780.9 284.8 1777.7 296.0C1774.5 307.2 1769.0 317.1 1762.8 325.8C1756.6 334.5 1749.2 341.2 1740.5 348.0C1731.8 354.8 1723.1 359.9 1710.7 366.7C1698.3 373.4 1682.8 381.6 1666.0 388.5C1649.2 395.4 1628.7 401.6 1610.0 408.0C1591.3 414.4 1576.5 418.9 1554.0 427.0C1531.5 435.1 1502.8 446.0 1475.0 456.3C1447.2 466.6 1416.7 477.7 1387.5 489.0C1358.3 500.3 1347.9 504.8 1300.0 524.1C1252.1 543.4 1150.0 584.8 1100.0 604.7C1050.0 624.6 1032.3 630.7 1000.0 643.8C967.7 656.8 937.2 670.3 906.0 682.8C874.8 695.3 843.7 707.0 812.5 718.8C781.3 730.5 744.8 744.1 718.8 753.0C692.7 761.9 676.8 767.3 656.0 772.0C635.2 776.7 614.8 779.5 593.8 781.0C572.8 782.5 549.8 782.5 530.0 781.0C510.2 779.5 492.3 776.2 475.0 772.0C457.7 767.8 442.3 762.3 426.0 755.5C409.7 748.7 392.2 739.8 377.0 731.0C361.8 722.2 347.8 712.9 335.0 703.0C322.2 693.1 310.5 682.0 300.0 671.5C289.5 661.0 279.3 651.1 272.0 640.0C264.7 628.9 259.8 614.9 256.3 605.0C252.8 595.1 253.2 581.1 251.0 580.5C248.8 579.9 243.9 600.9 243.3 601.5Z');backdrop-filter:blur(0.6px)"></div></div>
<svg class="layer" width="1920" height="914" viewBox="0 0 1920 914" style="position:absolute;left:0;top:0">
<defs>
<linearGradient id="hexg" x1="0" y1="0" x2="0" y2="1"><stop offset="0" stop-color="#3b3a37"/><stop offset="1" stop-color="#2c2b29"/></linearGradient>
<linearGradient id="hexf" x1="0" y1="0" x2="0" y2="1"><stop offset="0" stop-color="#3a3936"/><stop offset=".3" stop-color="#2e2d2a"/><stop offset=".8" stop-color="#282724"/><stop offset="1" stop-color="#1e1d1b"/></linearGradient>
<pattern id="hex" width="25" height="26" patternUnits="userSpaceOnUse" patternTransform="rotate(-8)">
<rect width="25" height="26" fill="#141312"/><path d="M0.40 6.50L4.50 0.50L20.50 0.50L24.60 6.50L20.50 12.50L4.50 12.50ZM12.90 19.50L17.00 13.50L33.00 13.50L37.10 19.50L33.00 25.50L17.00 25.50ZM-12.10 19.50L-8.00 13.50L8.00 13.50L12.10 19.50L8.00 25.50L-8.00 25.50ZM12.90 -6.50L17.00 -12.50L33.00 -12.50L37.10 -6.50L33.00 -0.50L17.00 -0.50ZM-12.10 -6.50L-8.00 -12.50L8.00 -12.50L12.10 -6.50L8.00 -0.50L-8.00 -0.50Z" fill="url(#hexf)"/><path d="M1.20 6.00L4.80 1.50L20.20 1.50L23.80 6.00M13.70 19.00L17.30 14.50L32.70 14.50L36.30 19.00M-11.30 19.00L-7.70 14.50L7.70 14.50L11.30 19.00M13.70 -7.00L17.30 -11.50L32.70 -11.50L36.30 -7.00M-11.30 -7.00L-7.70 -11.50L7.70 -11.50L11.30 -7.00" fill="none" stroke="#64625d" stroke-width="1.6" stroke-linejoin="round"/>
</pattern>
<pattern id="hex2" width="24" height="25.0" patternUnits="userSpaceOnUse" patternTransform="rotate(-14)">
<rect width="24" height="25.0" fill="#141312"/><path d="M0.40 6.25L4.50 0.50L19.50 0.50L23.60 6.25L19.50 12.00L4.50 12.00ZM12.40 18.75L16.50 13.00L31.50 13.00L35.60 18.75L31.50 24.50L16.50 24.50ZM-11.60 18.75L-7.50 13.00L7.50 13.00L11.60 18.75L7.50 24.50L-7.50 24.50ZM12.40 -6.25L16.50 -12.00L31.50 -12.00L35.60 -6.25L31.50 -0.50L16.50 -0.50ZM-11.60 -6.25L-7.50 -12.00L7.50 -12.00L11.60 -6.25L7.50 -0.50L-7.50 -0.50Z" fill="url(#hexf)"/><path d="M1.20 5.75L4.80 1.50L19.20 1.50L22.80 5.75M13.20 18.25L16.80 14.00L31.20 14.00L34.80 18.25M-10.80 18.25L-7.20 14.00L7.20 14.00L10.80 18.25M13.20 -6.75L16.80 -11.00L31.20 -11.00L34.80 -6.75M-10.80 -6.75L-7.20 -11.00L7.20 -11.00L10.80 -6.75" fill="none" stroke="#64625d" stroke-width="1.6" stroke-linejoin="round"/>
</pattern>
<linearGradient id="sheen" x1="0" y1="0" x2="1" y2="0"><stop offset="0" stop-color="#b8bcbf" stop-opacity=".36"/><stop offset=".5" stop-color="#b8bcbf" stop-opacity=".2"/><stop offset="1" stop-color="#b8bcbf" stop-opacity="0"/></linearGradient>
<linearGradient id="streak" x1="0" y1="0" x2="1" y2="0"><stop offset="0" stop-color="#c8d8e8" stop-opacity="0"/><stop offset=".5" stop-color="#c8d8e8" stop-opacity=".28"/><stop offset="1" stop-color="#c8d8e8" stop-opacity="0"/></linearGradient>
<clipPath id="topc"><path d="M243.3 601.5C242.7 602.1 244.5 590.1 247.5 584.0C250.5 577.9 255.7 570.6 261.5 564.8C267.3 559.0 276.1 553.0 282.5 549.0C288.9 545.0 289.8 544.2 300.0 540.8C310.2 537.4 329.2 532.8 343.8 528.8C358.4 524.8 372.9 520.8 387.5 516.8C402.1 512.8 416.7 508.6 431.3 504.5C445.9 500.4 460.4 496.7 475.0 492.5C489.6 488.3 504.2 483.9 518.8 479.5C533.4 475.1 548.0 470.5 562.6 466.0C577.2 461.5 591.7 457.1 606.3 452.3C620.9 447.6 634.5 442.8 650.1 437.5C665.7 432.2 679.8 427.2 700.0 420.4C720.2 413.6 730.1 409.9 771.3 396.5C812.5 383.1 906.2 353.2 947.2 339.8C988.2 326.4 987.0 326.2 1017.5 315.9C1048.0 305.6 1099.6 287.9 1130.0 278.0C1160.4 268.1 1178.5 263.3 1200.0 256.6C1221.5 249.9 1242.4 242.9 1259.1 237.8C1275.8 232.7 1283.5 231.2 1300.0 225.9C1316.5 220.7 1338.8 213.5 1358.3 206.3C1377.8 199.1 1397.2 190.6 1416.7 182.9C1436.2 175.2 1455.6 167.2 1475.0 160.3C1494.4 153.4 1518.7 145.8 1533.3 141.4C1547.9 137.0 1552.8 136.2 1562.5 134.1C1572.2 132.0 1580.5 129.8 1591.6 128.6C1602.6 127.4 1616.4 126.4 1628.8 126.7C1641.2 127.0 1653.6 128.0 1666.0 130.5C1678.4 133.0 1692.1 136.9 1703.3 141.6C1714.5 146.2 1724.4 152.3 1733.0 158.4C1741.6 164.5 1748.8 171.1 1755.0 178.0C1761.2 184.9 1766.2 192.7 1770.0 200.0C1773.8 207.3 1775.7 211.8 1777.7 221.6C1779.7 231.4 1782.0 246.4 1782.0 258.8C1782.0 271.2 1780.9 284.8 1777.7 296.0C1774.5 307.2 1769.0 317.1 1762.8 325.8C1756.6 334.5 1749.2 341.2 1740.5 348.0C1731.8 354.8 1723.1 359.9 1710.7 366.7C1698.3 373.4 1682.8 381.6 1666.0 388.5C1649.2 395.4 1628.7 401.6 1610.0 408.0C1591.3 414.4 1576.5 418.9 1554.0 427.0C1531.5 435.1 1502.8 446.0 1475.0 456.3C1447.2 466.6 1416.7 477.7 1387.5 489.0C1358.3 500.3 1347.9 504.8 1300.0 524.1C1252.1 543.4 1150.0 584.8 1100.0 604.7C1050.0 624.6 1032.3 630.7 1000.0 643.8C967.7 656.8 937.2 670.3 906.0 682.8C874.8 695.3 843.7 707.0 812.5 718.8C781.3 730.5 744.8 744.1 718.8 753.0C692.7 761.9 676.8 767.3 656.0 772.0C635.2 776.7 614.8 779.5 593.8 781.0C572.8 782.5 549.8 782.5 530.0 781.0C510.2 779.5 492.3 776.2 475.0 772.0C457.7 767.8 442.3 762.3 426.0 755.5C409.7 748.7 392.2 739.8 377.0 731.0C361.8 722.2 347.8 712.9 335.0 703.0C322.2 693.1 310.5 682.0 300.0 671.5C289.5 661.0 279.3 651.1 272.0 640.0C264.7 628.9 259.8 614.9 256.3 605.0C252.8 595.1 253.2 581.1 251.0 580.5C248.8 579.9 243.9 600.9 243.3 601.5Z"/></clipPath>
<filter id="blur6" x="-50%" y="-20%" width="200%" height="140%"><feGaussianBlur stdDeviation="7"/></filter>
<filter id="ash" x="-50%" y="-10%" width="200%" height="130%"><feGaussianBlur stdDeviation="1.2"/></filter>
</defs>
<g clip-path="url(#topc)">
<path d="M240 470L640 470L600 830L240 830Z" fill="url(#sheen)"/>
<path d="M345 522L405 522L505 770L445 770Z" fill="#c9d6e4" opacity=".22" filter="url(#blur6)"/>
<path d="M1395 150L1470 130L1575 440L1500 470Z" fill="#d8dce0" opacity=".07" filter="url(#blur6)"/>
</g>
<path d="M684.4 474.5C685.9 468.5 688.7 456.4 695.3 449.2C701.9 442.0 713.4 435.2 724.2 431.1C735.0 427.0 748.3 425.5 760.3 424.6C772.3 423.7 784.4 424.3 796.4 425.7C808.4 427.1 822.3 429.6 832.5 432.9C842.7 436.2 852.1 439.9 857.8 445.6C863.5 451.3 865.0 460.0 866.8 467.2C868.6 474.4 866.8 482.3 868.6 488.9C870.4 495.5 871.7 501.0 877.7 507.0C883.7 513.0 893.6 518.4 904.7 525.0C915.8 531.6 933.6 539.5 944.5 546.7C955.4 553.9 964.7 561.2 969.8 568.4C974.9 575.6 975.8 582.2 975.2 590.0C974.6 597.8 972.4 607.5 966.1 615.3C959.8 623.1 949.2 631.6 937.2 637.0C925.2 642.4 909.5 646.3 893.9 647.8C878.3 649.3 859.0 649.0 843.4 646.0C827.8 643.0 810.9 636.6 800.0 629.7C789.1 622.8 782.8 614.7 778.3 604.5C773.8 594.3 774.7 578.6 772.9 568.4C771.1 558.2 772.6 550.9 767.5 543.1C762.4 535.3 752.4 528.0 742.2 521.4C732.0 514.8 715.4 509.4 706.1 503.4C696.8 497.4 689.8 490.1 686.2 485.3C682.6 480.5 682.9 480.5 684.4 474.5Z" fill="url(#hex)"/>
<path d="M1173.3 300.0C1174.3 294.8 1177.9 290.9 1183.6 286.7C1189.3 282.5 1197.4 277.5 1207.3 274.8C1217.2 272.1 1230.9 270.7 1242.7 270.4C1254.5 270.1 1267.8 271.1 1278.1 272.8C1288.4 274.5 1296.8 277.2 1304.7 280.7C1312.6 284.2 1319.0 288.8 1325.4 294.0C1331.8 299.2 1336.2 305.9 1343.1 311.8C1350.0 317.7 1355.4 324.6 1366.7 329.5C1378.0 334.4 1396.2 337.4 1411.0 341.3C1425.8 345.2 1441.5 348.2 1455.3 353.1C1469.1 358.0 1484.1 364.4 1493.7 370.8C1503.3 377.2 1510.4 384.6 1512.9 391.5C1515.4 398.4 1513.2 406.3 1508.5 412.2C1503.8 418.1 1494.8 423.8 1484.9 427.0C1475.1 430.2 1461.7 431.2 1449.4 431.4C1437.1 431.6 1423.8 430.6 1411.0 428.4C1398.2 426.2 1384.9 423.3 1372.6 418.1C1360.3 412.9 1349.0 405.3 1337.2 397.4C1325.4 389.5 1312.6 377.7 1301.8 370.8C1291.0 363.9 1284.5 360.5 1272.2 356.1C1259.9 351.7 1240.7 348.1 1227.9 344.2C1215.1 340.2 1203.8 336.8 1195.4 332.4C1187.0 328.0 1181.4 323.1 1177.7 317.7C1174.0 312.3 1172.3 305.2 1173.3 300.0Z" fill="url(#hex2)"/>
<g opacity=".35" filter="url(#ash)" transform="translate(1.5 2)"><path d="M815.5 350.8L817.3 371.5" stroke="#f94141" stroke-width="9" fill="none"/><circle cx="815.5" cy="350.8" r="4.5" fill="#f94141"/><path d="M818.1 383.4L819.9 412.3" stroke="#f94141" stroke-width="9" fill="none"/><path d="M821 423.2L822.8 452" stroke="#f94141" stroke-width="9" fill="none"/><path d="M823.8 463.6L826 491.8" stroke="#f94141" stroke-width="9" fill="none"/><path d="M826.5 502.6L827.5 516" stroke="#f94141" stroke-width="9" fill="none"/><path d="M813.7 514.9L842.6 514.9L828.9 543Z" fill="#f94141"/><path d="M1330.1 190.1L1330.8 214.9" stroke="#f94141" stroke-width="9" fill="none"/><circle cx="1330.1" cy="190.1" r="4.5" fill="#f94141"/><path d="M1332.3 224.6L1333.2 249.7" stroke="#f94141" stroke-width="9" fill="none"/><path d="M1334.1 264.5L1335.1 294.2" stroke="#f94141" stroke-width="9" fill="none"/><path d="M1335.6 304.5L1336 313" stroke="#f94141" stroke-width="9" fill="none"/><path d="M1321.5 311.9L1351.2 311.9L1337.9 340.7Z" fill="#f94141"/></g>
<path d="M815.5 350.8L817.3 371.5" stroke="#f94141" stroke-width="9" fill="none"/><circle cx="815.5" cy="350.8" r="4.5" fill="#f94141"/><path d="M818.1 383.4L819.9 412.3" stroke="#f94141" stroke-width="9" fill="none"/><path d="M821 423.2L822.8 452" stroke="#f94141" stroke-width="9" fill="none"/><path d="M823.8 463.6L826 491.8" stroke="#f94141" stroke-width="9" fill="none"/><path d="M826.5 502.6L827.5 516" stroke="#f94141" stroke-width="9" fill="none"/><path d="M813.7 514.9L842.6 514.9L828.9 543Z" fill="#f94141"/>
<path d="M1330.1 190.1L1330.8 214.9" stroke="#f94141" stroke-width="9" fill="none"/><circle cx="1330.1" cy="190.1" r="4.5" fill="#f94141"/><path d="M1332.3 224.6L1333.2 249.7" stroke="#f94141" stroke-width="9" fill="none"/><path d="M1334.1 264.5L1335.1 294.2" stroke="#f94141" stroke-width="9" fill="none"/><path d="M1335.6 304.5L1336 313" stroke="#f94141" stroke-width="9" fill="none"/><path d="M1321.5 311.9L1351.2 311.9L1337.9 340.7Z" fill="#f94141"/>
</svg>
<svg width="0" height="0" style="position:absolute">
<defs>
<linearGradient id="gW" x1="0" y1="0" x2="0" y2="1"><stop offset="0" stop-color="#ffffff"/><stop offset="1" stop-color="#a9b2c4"/></linearGradient>
<linearGradient id="gB" x1="0" y1="0" x2="0" y2="1"><stop offset="0" stop-color="#c9dcf4"/><stop offset="1" stop-color="#8fb0dc"/></linearGradient>
<linearGradient id="gBd" x1="0" y1="0" x2="1" y2="0"><stop offset="0" stop-color="#8eabd6"/><stop offset="1" stop-color="#5f82b8"/></linearGradient>
<linearGradient id="gG" x1="0" y1="0" x2="0" y2="1"><stop offset="0" stop-color="#f4f6fa"/><stop offset="1" stop-color="#b9c1cf"/></linearGradient>
<radialGradient id="gC" cx=".4" cy=".35" r=".7"><stop offset="0" stop-color="#fff"/><stop offset="1" stop-color="#98a2b5"/></radialGradient>
<symbol id="i-sk" viewBox="0 0 32 32"><rect x="2" y="3.5" width="25" height="25" rx="1.5" fill="url(#gW)" stroke="#2b2b2b" stroke-width="1.4"/><path d="M5.5 7V25.5H22" fill="none" stroke="#555" stroke-width="1"/><rect x="4" y="23.5" width="3.5" height="3.5" fill="#3b7de3"/><path d="M13 19.5L24.5 6.5L27.5 9L16 22Z" fill="#f3c62e" stroke="#333" stroke-width="1"/><path d="M13 19.5L12.3 22.7L16 22Z" fill="#fff" stroke="#333" stroke-width="1"/><path d="M24.5 6.5L26 4.8L29 7.4L27.5 9Z" fill="#c9763a" stroke="#333" stroke-width=".8"/><path d="M20.5 25.5h3v-3h3v3h3v3h-3v3h-3v-3h-3z" fill="#fff" stroke="#333" stroke-width="1"/></symbol>
<symbol id="i-line" viewBox="0 0 32 32"><path d="M3 21H13" stroke="#444" stroke-width="1.3"/><path d="M13 4A8.5 8.5 0 0 1 13 21" fill="none" stroke="#444" stroke-width="1.3"/><rect x="1" y="19" width="4" height="4" fill="#2e6ad8"/><rect x="11" y="19" width="4" height="4" fill="#2e6ad8"/><rect x="11" y="2" width="4" height="4" fill="#2e6ad8"/></symbol>
<symbol id="i-rect" viewBox="0 0 32 32"><rect x="2.5" y="7" width="26" height="18" rx="1" fill="url(#gW)" stroke="#2b2b2b" stroke-width="1.3"/><rect x="0.5" y="22.5" width="4" height="4" fill="#2e6ad8"/><rect x="26.5" y="4.5" width="4" height="4" fill="#2e6ad8"/></symbol>
<symbol id="i-dim" viewBox="0 0 32 32"><path d="M3 2V30M29 2V30M4 10H28M4 10L7 8.2M4 10L7 11.8M28 10L25 8.2M28 10L25 11.8" fill="none" stroke="#6b6b6b" stroke-width="1.2"/></symbol>
<symbol id="i-proj" viewBox="0 0 32 32"><path d="M2 11L10 3H31L23 11Z" fill="#fff" stroke="#222" stroke-width="1.3"/><path d="M9 9L13 5H26L22 9Z" fill="#93b5e2" stroke="#3d5e92" stroke-width=".8"/><path d="M8 17L11 14H23L20 17Z" fill="#e7eef8" stroke="#333" stroke-width="1"/><rect x="8" y="17" width="12" height="12" fill="url(#gG)" stroke="#333" stroke-width="1.2"/><path d="M20 17L23 14V26L20 29Z" fill="#a6b4cb" stroke="#333" stroke-width="1"/></symbol>
<symbol id="i-offs" viewBox="0 0 32 32"><path d="M31 19H18V11A5 5 0 0 0 8 11V19H5A3 3 0 0 0 5 26H31" fill="none" stroke="#5d93ec" stroke-width="3.2"/><path d="M31 19H18V11A5 5 0 0 0 8 11V19H5A3 3 0 0 0 5 26H31" fill="none" stroke="#e8eefc" stroke-width="1.2"/></symbol>
<symbol id="i-circ" viewBox="0 0 32 32"><circle cx="15.5" cy="16.5" r="13.5" fill="url(#gC)" stroke="#2b2b2b" stroke-width="1.5"/><path d="M6 26L25 7M13.5 16.5h4M15.5 14.5v4" stroke="#222" stroke-width="1.1"/><rect x="24" y="3" width="4" height="4" fill="#2e6ad8"/></symbol>
<symbol id="i-pat" viewBox="0 0 32 32"><circle cx="16.5" cy="16" r="10" fill="none" stroke="#8c8c8c" stroke-width="1"/><rect x="13" y="1.5" width="7" height="7" fill="#eef1f6" stroke="#7e8796" stroke-width=".9"/><rect x="2" y="12.5" width="7" height="7" fill="#a9c4e8" stroke="#6d8cbd" stroke-width=".9"/><rect x="24" y="12.5" width="7" height="7" fill="#a9c4e8" stroke="#6d8cbd" stroke-width=".9"/><rect x="13" y="23.5" width="7" height="7" fill="#a9c4e8" stroke="#6d8cbd" stroke-width=".9"/></symbol>
<symbol id="i-form" viewBox="0 0 32 32"><rect x="1.5" y="3" width="24" height="24" rx="6" fill="#c8a2f2" stroke="#9157d6" stroke-width="1.2"/><path d="M7 4.5V26M13 3.5V27M19 4V26.5M2 9H25M2 15H25.5M2 21H25" stroke="#a16be0" stroke-width=".9"/><rect x="20.5" y="19.5" width="10" height="11" fill="#eee" stroke="#333" stroke-width="1.1"/><path d="M21 25H26M24 22.5L27 25L24 27.5Z" fill="#222" stroke="#222" stroke-width="1.2"/></symbol>
<symbol id="i-extr" viewBox="0 0 32 32"><path d="M3 7L7 3H21L17 7Z" fill="#d8e6f8" stroke="#2b2b2b" stroke-width="1"/><rect x="3" y="7" width="14" height="23" fill="url(#gB)" stroke="#2b2b2b" stroke-width="1.2"/><rect x="3.6" y="25" width="12.8" height="4.4" fill="#dfe7f2"/><path d="M17 7L21 3V26L17 30Z" fill="#7f9dc6" stroke="#2b2b2b" stroke-width="1"/><path d="M27.5 28V7M25.3 9.5L27.5 5.5L29.7 9.5Z" fill="#222" stroke="#222" stroke-width="1"/></symbol>
<symbol id="i-rev" viewBox="0 0 32 32"><path d="M30.9 6.7Q16 -1 3.5 7" fill="none" stroke="#333" stroke-width="1.1"/><path d="M1.2 7.6L6.2 4.2L6.6 9.6Z" fill="#333"/><path d="M2.1 14.7Q17 4 31.7 14.7V24.2L24.4 29.3Q17 25 9 29.3L2.1 24.2Z" fill="#8fb0dc" stroke="#24406e" stroke-width="1.2"/><path d="M2.6 14.8Q17 5 31.2 14.7L24.4 17.8Q17 14 8.7 17.8Z" fill="#d2e2f5"/><path d="M2.6 15.2L8.7 17.8Q17 14 24.4 17.8V28.8Q17 25 9 28.8L2.6 24Z" fill="url(#gB)"/><path d="M24.4 17.8L31.2 14.9V24L24.4 28.8Z" fill="url(#gW)" stroke="#24406e" stroke-width="1"/><path d="M2.1 14.7Q17 4 31.7 14.7V24.2L24.4 29.3Q17 25 9 29.3L2.1 24.2Z" fill="none" stroke="#24406e" stroke-width="1.2"/></symbol>
<symbol id="i-swp" viewBox="0 0 32 32"><path d="M2 14L8 3H29L24 9H13L11 14H27L30 20L25 28H11L14 22H4Z" fill="url(#gB)" stroke="#2b2b2b" stroke-width="1.2"/><path d="M2 14V18L4 22" fill="#7f9dc6" stroke="#2b2b2b" stroke-width="1"/><rect x="11" y="20" width="10" height="10" fill="#f4f4f4" stroke="#2b2b2b" stroke-width="1.1"/></symbol>
<symbol id="i-hole" viewBox="0 0 32 32"><path d="M2.5 9.5L9 3.2H30L24 9.5Z" fill="#f4f5f8" stroke="#2b2b2b" stroke-width="1"/><rect x="2.5" y="9.5" width="21.5" height="20.5" fill="url(#gG)" stroke="#2b2b2b" stroke-width="1.2"/><path d="M24 9.5L30 3.2V23.5L24 30Z" fill="#aeb7c6" stroke="#2b2b2b" stroke-width="1"/><circle cx="12.8" cy="20.8" r="6.9" fill="#a9c6ea" stroke="#24406e" stroke-width="1"/><path d="M9.8 15.5Q17 13.5 18.8 20.5Q15 16.5 9.8 15.5Z" fill="#fff" stroke="#24406e" stroke-width=".8"/></symbol>
<symbol id="i-cpat" viewBox="0 0 32 32"><circle cx="16" cy="16" r="10" fill="none" stroke="#333" stroke-width="1"/><path d="M12 2H19V9H12Z" fill="#c8d2e0" stroke="#444" stroke-width=".9"/><path d="M1.5 13H8.5V20H1.5Z" fill="#8fb3e2" stroke="#4f73ab" stroke-width=".9"/><path d="M23.5 13H30.5V20H23.5Z" fill="#8fb3e2" stroke="#4f73ab" stroke-width=".9"/><path d="M12 23H19V30H12Z" fill="#8fb3e2" stroke="#4f73ab" stroke-width=".9"/></symbol>
<symbol id="i-mir" viewBox="0 0 32 32"><path d="M16 1V31" stroke="#222" stroke-width="1.2"/><path d="M2 6Q6 2 9 5L11 22L8 22V28H5L3 27Z" fill="#f2f2f2" stroke="#2b2b2b" stroke-width="1.1"/><path d="M30 6Q26 2 23 5L20 22L23 22V28H27L29 27Z" fill="#a8c3e8" stroke="#2b2b2b" stroke-width="1.1"/></symbol>
<symbol id="i-pp" viewBox="0 0 32 32"><path d="M1 28V7L6 2H10L6 7V28Z" fill="#fff" stroke="#2b2b2b" stroke-width="1"/><path d="M6 7L11 2H24L19 7Z" fill="#cfe0f6" stroke="#2b2b2b" stroke-width="1"/><rect x="6" y="7" width="13" height="22" fill="url(#gB)" stroke="#2b2b2b" stroke-width="1.2"/><path d="M19 7L24 2V24L19 29Z" fill="#7794c0" stroke="#2b2b2b" stroke-width="1"/><path d="M22 15H27V12L31 16L27 20V17H22Z" fill="#222"/></symbol>
<symbol id="i-fil" viewBox="0 0 32 32"><path d="M2 10L8 4H17L11 10Z" fill="#eef1f6" stroke="#2b2b2b" stroke-width="1"/><path d="M2 10H11V29H2Z" fill="url(#gG)" stroke="#2b2b2b" stroke-width="0"/><path d="M2 10V29H24V21Q24 12 14 10Z" fill="url(#gG)" stroke="#2b2b2b" stroke-width="1.2"/><path d="M11 10L17 4Q29 4 30 15L24 21Q24 12 11 10Z" fill="#94b6e4" stroke="#2b2b2b" stroke-width="1"/><path d="M24 21L30 15V23L24 29Z" fill="#b3bccb" stroke="#2b2b2b" stroke-width="1"/></symbol>
<symbol id="i-cha" viewBox="0 0 32 32"><path d="M2 12L12 2L21 11L11 21Z" fill="#94b6e4" stroke="#2b2b2b" stroke-width="1.1"/><path d="M12 2H24L31 9V29H12" fill="#eef1f6" stroke="#2b2b2b" stroke-width="1"/><path d="M2 12V29H31V9L21 11L11 21Z" fill="url(#gG)" stroke="#2b2b2b" stroke-width="1.1"/><path d="M2 12L12 2L21 11L11 21Z" fill="#94b6e4" stroke="#2b2b2b" stroke-width="1.1"/></symbol>
<symbol id="i-shl" viewBox="0 0 32 32"><path d="M2 9L8 3H29L23 9Z" fill="#eef1f6" stroke="#2b2b2b" stroke-width="1"/><rect x="2" y="9" width="21" height="20" fill="url(#gG)" stroke="#2b2b2b" stroke-width="1.2"/><path d="M23 9L29 3V23L23 29Z" fill="#b3bccb" stroke="#2b2b2b" stroke-width="1"/><rect x="6" y="13" width="13" height="12" fill="#8fb3e2" stroke="#2b2b2b" stroke-width="1"/><path d="M10 16H16V22H10" fill="#dfe8f5" stroke="#2b2b2b" stroke-width="1"/></symbol>
<symbol id="i-app" viewBox="0 0 32 32"><defs><clipPath id="cpa"><circle cx="16" cy="16" r="14"/></clipPath><radialGradient id="appsh" cx=".38" cy=".35" r=".7"><stop offset="0" stop-color="#fff" stop-opacity=".45"/><stop offset=".55" stop-color="#fff" stop-opacity="0"/><stop offset="1" stop-color="#000" stop-opacity=".28"/></radialGradient></defs><g clip-path="url(#cpa)"><rect width="32" height="32" fill="#8fb2e6"/><path d="M16 16L13 0H32V17Z" fill="#d98a94"/><path d="M16 16L32 13V32H11Z" fill="#f4cf48"/><rect width="32" height="32" fill="url(#appsh)"/></g><circle cx="16" cy="16" r="14" fill="none" stroke="#a0a0a0" stroke-width=".8"/></symbol>
<symbol id="i-asm" viewBox="0 0 32 32"><path d="M5 4L8 1H19L16 4Z" fill="#d8e6f8" stroke="#2b2b2b" stroke-width=".9"/><rect x="5" y="4" width="11" height="12" fill="#93b5e2" stroke="#2b2b2b" stroke-width="1"/><path d="M16 4L19 1V13L16 16Z" fill="#6f8fbf" stroke="#2b2b2b" stroke-width=".9"/><rect x="5" y="16" width="11" height="13" fill="url(#gG)" stroke="#2b2b2b" stroke-width="1"/><path d="M16 16L19 13H30L27 16Z" fill="#f2f4f8" stroke="#2b2b2b" stroke-width=".9"/><rect x="16" y="16" width="11" height="13" fill="url(#gG)" stroke="#2b2b2b" stroke-width="1"/><path d="M27 16L30 13V26L27 29Z" fill="#b3bccb" stroke="#2b2b2b" stroke-width=".9"/><path d="M3 5h3v-3h3v3h3v3h-3v3h-3v-3h-3z" fill="#fff" stroke="#333" stroke-width="1"/></symbol>
<symbol id="i-jnt" viewBox="0 0 32 32"><path d="M2 10L9 4V24L2 30Z" fill="url(#gG)" stroke="#2b2b2b" stroke-width="1.1"/><path d="M9 4L13 6V22L9 24Z" fill="#c4ccd8" stroke="#2b2b2b" stroke-width="1"/><ellipse cx="11" cy="4" rx="2.5" ry="2" fill="#fff" stroke="#333" stroke-width=".9"/><path d="M19 12L23 8L30 15V30L23 23Z" fill="url(#gG)" stroke="#2b2b2b" stroke-width="1.1"/><path d="M17 15H21V26H17Z" fill="#dfe4ec" stroke="#2b2b2b" stroke-width=".9"/><path d="M19 7V14M9 17V22" stroke="#f07820" stroke-width="1.2"/></symbol>
<symbol id="i-cpl" viewBox="0 0 32 32"><path d="M2 8L7 3H16L11 8Z" fill="#f6f7fa" stroke="#2b2b2b" stroke-width="1"/><rect x="2" y="8" width="9" height="22" fill="url(#gG)" stroke="#2b2b2b" stroke-width="1.2"/><path d="M11 8L16 3V25L11 30Z" fill="#5c9a4c" stroke="#2b2b2b" stroke-width="1"/><path d="M20 9L26 3V24L20 30Z" fill="#ee9a5e" stroke="#8a3c10" stroke-width="1"/></symbol>
<symbol id="i-mid" viewBox="0 0 32 32"><path d="M2 13L6 9H29L25 13Z" fill="#f2f4f8" stroke="#2b2b2b" stroke-width="1"/><rect x="2" y="13" width="23" height="13" fill="url(#gG)" stroke="#2b2b2b" stroke-width="1.1"/><path d="M25 13L29 9V22L25 26Z" fill="#5c9a4c" stroke="#2b2b2b" stroke-width="1"/><path d="M2 13L6 9V22L2 26Z" fill="#b8d8ae" stroke="#3c6e30" stroke-width=".9" opacity=".8"/><path d="M12 10L18 3V24L12 31Z" fill="#ee9a5e" stroke="#8a3c10" stroke-width="1" opacity=".85"/></symbol>
<symbol id="i-insp" viewBox="0 0 32 32"><path d="M3 12H31M3 9.5V14.5M31 9.5V14.5" stroke="#444" stroke-width="1.3"/><rect x="3" y="18" width="28" height="6" rx="1" fill="#f1c634" stroke="#b08a18" stroke-width="1"/><path d="M6 18v2M9 18v1.5M12 18v2M15 18v1.5M18 18v2M21 18v1.5M24 18v2M27 18v1.5" stroke="#8a6a10" stroke-width=".8"/></symbol>
<symbol id="i-ins" viewBox="0 0 32 32"><rect x="1.5" y="1.5" width="29" height="29" rx="1" fill="#fff" stroke="#333" stroke-width="1.2"/><rect x="3.5" y="3.5" width="25" height="25" fill="#c7d4e4"/><path d="M3.5 28.5L12 13L20 22L24 17L28.5 24V28.5Z" fill="#8a8f96"/><path d="M3.5 28.5L12 13L16 18Z" fill="#6f747b"/><circle cx="22" cy="9" r="3" fill="#fff6b0" stroke="#f3e070" stroke-width="1"/></symbol>
<symbol id="i-make" viewBox="0 0 32 32"><defs><linearGradient id="mkb" x1="0" y1="0" x2="0" y2="1"><stop offset="0" stop-color="#d9dde4"/><stop offset=".3" stop-color="#fafafa"/><stop offset="1" stop-color="#f2f2f2"/></linearGradient><linearGradient id="mkw" x1="0" y1="0" x2="0" y2="1"><stop offset="0" stop-color="#5a5a5a"/><stop offset="1" stop-color="#9a9a9a"/></linearGradient></defs><path d="M1.6 5.5L4.5 2.9H27.8L30.7 5.5V29.5Q30.7 30.7 29.5 30.7H2.8Q1.6 30.7 1.6 29.5Z" fill="url(#mkb)" stroke="#333a44" stroke-width="1.1"/><rect x="26" y="9.3" width="2" height="2" fill="#1a8a1a"/><rect x="4.6" y="13.2" width="23" height="14.5" rx="1.5" fill="url(#mkw)" stroke="#333" stroke-width=".9"/><path d="M6.6 25.6L9 19.5H24L26.4 25.6Z" fill="#f6f6f6"/><path d="M13.6 13.8H17.6V19.5L15.6 21.5L13.6 19.5Z" fill="#9fd0e6" stroke="#1f4fc0" stroke-width=".9"/></symbol>
<symbol id="i-add" viewBox="0 0 32 32"><defs><linearGradient id="adb" x1="0" y1="0" x2="0" y2="1"><stop offset="0" stop-color="#eef0f4"/><stop offset="1" stop-color="#a9b0be"/></linearGradient></defs><rect x="2" y="2.9" width="23.5" height="21.9" rx="1" fill="url(#adb)" stroke="#333" stroke-width="1.1"/><rect x="2.6" y="3.5" width="22.3" height="3.6" fill="#8d939c"/><path d="M2 7.6H25.5" stroke="#333" stroke-width="1"/><path d="M5.2 11.5L8.3 14L5.2 16.5M10 14H13.7" fill="none" stroke="#222" stroke-width="1"/><g transform="translate(24.8 23.6)"><circle r="5.6" fill="none" stroke="#1f3f78" stroke-width="2.6" stroke-dasharray="2.3 2.1"/><circle r="5.6" fill="none" stroke="#c9dcf4" stroke-width="1.2" stroke-dasharray="1.5 2.9" stroke-dashoffset="-.4"/><circle r="4.6" fill="#c9dcf4" stroke="#1f3f78" stroke-width=".9"/><circle r="2" fill="#fff" stroke="#1f3f78" stroke-width=".6"/></g></symbol>
<symbol id="i-sel" viewBox="0 0 44 44"><rect x="0" y="0" width="44" height="44" fill="#5b8dc1"/><rect x="5" y="5" width="21" height="13" fill="none" stroke="#59c239" stroke-width="1.6"/><path d="M27 16V33L31 29L34 36L37 35L34 28H39Z" fill="#fff" stroke="#222" stroke-width="1.1"/></symbol>
</defs></svg>

<div class="ui" id="model"><div class="grip" style="left:6px"></div><div class="grip" style="left:10px"></div><div class="t">MODEL<b style="display:inline-block;width:0;height:0;border-left:4px solid transparent;border-right:4px solid transparent;border-top:5px solid #fff;margin-left:5px;vertical-align:2px"></b></div></div>
<div class="ui" id="tb">
<div class="sep" style="left:389px"></div>
<div class="sep" style="left:731px"></div>
<div class="sep" style="left:977px"></div>
<div class="sep" style="left:1079px"></div>
<div class="sep" style="left:1189px"></div>
<div class="sep" style="left:1275px"></div>
<div class="sep" style="left:1355px"></div>
<div class="sep" style="left:1423px"></div>
<div class="sep" style="left:1509px"></div>
<svg class="ic" style="left:10px;top:9px;width:32px;height:32px" width="32" height="32" viewBox="0 0 32 32"><use href="#i-sk"/></svg>
<svg class="ic" style="left:58px;top:9px;width:32px;height:32px" width="32" height="32" viewBox="0 0 32 32"><use href="#i-line"/></svg>
<svg class="ic" style="left:106px;top:9px;width:32px;height:32px" width="32" height="32" viewBox="0 0 32 32"><use href="#i-rect"/></svg>
<svg class="ic" style="left:154px;top:9px;width:32px;height:32px" width="32" height="32" viewBox="0 0 32 32"><use href="#i-dim"/></svg>
<svg class="ic" style="left:202px;top:9px;width:32px;height:32px" width="32" height="32" viewBox="0 0 32 32"><use href="#i-proj"/></svg>
<svg class="ic" style="left:250px;top:9px;width:32px;height:32px" width="32" height="32" viewBox="0 0 32 32"><use href="#i-offs"/></svg>
<svg class="ic" style="left:298px;top:9px;width:32px;height:32px" width="32" height="32" viewBox="0 0 32 32"><use href="#i-circ"/></svg>
<svg class="ic" style="left:346px;top:9px;width:32px;height:32px" width="32" height="32" viewBox="0 0 32 32"><use href="#i-pat"/></svg>
<svg class="ic" style="left:399px;top:9px;width:32px;height:32px" width="32" height="32" viewBox="0 0 32 32"><use href="#i-form"/></svg>
<svg class="ic" style="left:448px;top:9px;width:32px;height:32px" width="32" height="32" viewBox="0 0 32 32"><use href="#i-extr"/></svg>
<svg class="ic" style="left:495px;top:9px;width:32px;height:32px" width="32" height="32" viewBox="0 0 32 32"><use href="#i-rev"/></svg>
<svg class="ic" style="left:544px;top:9px;width:32px;height:32px" width="32" height="32" viewBox="0 0 32 32"><use href="#i-swp"/></svg>
<svg class="ic" style="left:592px;top:9px;width:32px;height:32px" width="32" height="32" viewBox="0 0 32 32"><use href="#i-hole"/></svg>
<svg class="ic" style="left:640px;top:9px;width:32px;height:32px" width="32" height="32" viewBox="0 0 32 32"><use href="#i-cpat"/></svg>
<svg class="ic" style="left:687px;top:9px;width:32px;height:32px" width="32" height="32" viewBox="0 0 32 32"><use href="#i-mir"/></svg>
<svg class="ic" style="left:742px;top:9px;width:32px;height:32px" width="32" height="32" viewBox="0 0 32 32"><use href="#i-pp"/></svg>
<svg class="ic" style="left:789px;top:9px;width:32px;height:32px" width="32" height="32" viewBox="0 0 32 32"><use href="#i-fil"/></svg>
<svg class="ic" style="left:838px;top:9px;width:32px;height:32px" width="32" height="32" viewBox="0 0 32 32"><use href="#i-cha"/></svg>
<svg class="ic" style="left:886px;top:9px;width:32px;height:32px" width="32" height="32" viewBox="0 0 32 32"><use href="#i-shl"/></svg>
<svg class="ic" style="left:934px;top:9px;width:32px;height:32px" width="32" height="32" viewBox="0 0 32 32"><use href="#i-app"/></svg>
<svg class="ic" style="left:987px;top:9px;width:32px;height:32px" width="32" height="32" viewBox="0 0 32 32"><use href="#i-asm"/></svg>
<svg class="ic" style="left:1036px;top:9px;width:32px;height:32px" width="32" height="32" viewBox="0 0 32 32"><use href="#i-jnt"/></svg>
<svg class="ic" style="left:1094px;top:9px;width:32px;height:32px" width="32" height="32" viewBox="0 0 32 32"><use href="#i-cpl"/></svg>
<svg class="ic" style="left:1142px;top:9px;width:32px;height:32px" width="32" height="32" viewBox="0 0 32 32"><use href="#i-mid"/></svg>
<svg class="ic" style="left:1215px;top:9px;width:32px;height:32px" width="32" height="32" viewBox="0 0 32 32"><use href="#i-insp"/></svg>
<svg class="ic" style="left:1299px;top:9px;width:32px;height:32px" width="32" height="32" viewBox="0 0 32 32"><use href="#i-ins"/></svg>
<svg class="ic" style="left:1373px;top:9px;width:32px;height:32px" width="32" height="32" viewBox="0 0 32 32"><use href="#i-make"/></svg>
<svg class="ic" style="left:1450px;top:9px;width:32px;height:32px" width="32" height="32" viewBox="0 0 32 32"><use href="#i-add"/></svg>
<svg class="ic" style="left:1527px;top:4px;width:44px;height:44px" width="44" height="44" viewBox="0 0 44 44"><use href="#i-sel"/></svg>
<div class="lbl" style="left:191px;transform:translateX(-50%)">SKETCH<b></b></div>
<div class="lbl" style="left:560px;transform:translateX(-50%)">CREATE<b></b></div>
<div class="lbl" style="left:852px;transform:translateX(-50%)">MODIFY<b></b></div>
<div class="lbl" style="left:1027px;transform:translateX(-50%)">ASSEMBLE<b></b></div>
<div class="lbl" style="left:1135px;transform:translateX(-50%)">CONSTRUCT<b></b></div>
<div class="lbl" style="left:1234px;transform:translateX(-50%)">INSPECT<b></b></div>
<div class="lbl" style="left:1315px;transform:translateX(-50%)">INSERT<b></b></div>
<div class="lbl" style="left:1388px;transform:translateX(-50%)">MAKE<b></b></div>
<div class="lbl" style="left:1465px;transform:translateX(-50%)">ADD-INS<b></b></div>
<div class="lbl" style="left:1550px;transform:translateX(-50%)">SELECT<b></b></div>
</div>
<svg width="0" height="0" style="position:absolute"><defs>
<radialGradient id="gBulbY" cx=".4" cy=".35" r=".7"><stop offset="0" stop-color="#fffbd0"/><stop offset=".5" stop-color="#f6e35a"/><stop offset="1" stop-color="#c9a818"/></radialGradient>
<radialGradient id="gBulbB" cx=".4" cy=".35" r=".7"><stop offset="0" stop-color="#ffffff"/><stop offset=".6" stop-color="#dce6f6"/><stop offset="1" stop-color="#8ea6cc"/></radialGradient>
<linearGradient id="gTri" x1="0" y1="0" x2="1" y2="1"><stop offset="0" stop-color="#fff"/><stop offset="1" stop-color="#222"/></linearGradient>
<symbol id="bulbY" viewBox="0 0 12 16"><circle cx="6" cy="6" r="5" fill="url(#gBulbY)" stroke="#b59a20" stroke-width=".6"/><rect x="3.8" y="10.5" width="4.4" height="4" fill="#e8e8e8" stroke="#666" stroke-width=".6"/><rect x="4.5" y="14" width="3" height="1.5" fill="#444"/></symbol>
<symbol id="bulbB" viewBox="0 0 12 16"><circle cx="6" cy="6" r="5" fill="url(#gBulbB)" stroke="#7088b0" stroke-width=".6"/><rect x="3.8" y="10.5" width="4.4" height="4" fill="#e8e8e8" stroke="#666" stroke-width=".6"/><rect x="4.5" y="14" width="3" height="1.5" fill="#444"/></symbol>
<symbol id="folder" viewBox="0 0 16 14"><path d="M0.5 2.5H6L7 1H10.5L11 2.5H15.5V13.5H0.5Z" fill="#f4f4f4" stroke="#444" stroke-width="1"/><path d="M0.5 4.5H15.5" stroke="#444" stroke-width=".8"/></symbol>
<symbol id="triO" viewBox="0 0 10 13"><path d="M1 1L9 6.5L1 12Z" fill="#f0f0f0" stroke="#222" stroke-width="1.3"/></symbol>
<symbol id="triF" viewBox="0 0 12 12"><path d="M11 1V11H1Z" fill="url(#gTri)" stroke="#222" stroke-width="1"/></symbol>
<symbol id="skic" viewBox="0 0 16 16"><rect x="1" y="1" width="14" height="14" fill="#fff" stroke="#222" stroke-width="1.3"/><path d="M3.5 3V12.5H13" fill="none" stroke="#3a6fd8" stroke-width="1.2"/><path d="M5 10L12 2.5L14 4.5L7 12Z" fill="#f1c232" stroke="#333" stroke-width=".7"/></symbol>
<symbol id="gear" viewBox="0 0 16 16"><g fill="#555"><circle cx="8" cy="8" r="5.5"/><rect x="6.5" y="0.5" width="3" height="15" rx=".5"/><rect x="0.5" y="6.5" width="15" height="3" rx=".5"/><rect x="6.5" y="0.5" width="3" height="15" rx=".5" transform="rotate(45 8 8)"/><rect x="6.5" y="0.5" width="3" height="15" rx=".5" transform="rotate(-45 8 8)"/></g><circle cx="8" cy="8" r="2.4" fill="#c9c9c9"/></symbol>
<symbol id="cube" viewBox="0 0 16 16"><path d="M1 4.5L4.5 1H15L11.5 4.5Z" fill="#fff" stroke="#444" stroke-width=".9"/><rect x="1" y="4.5" width="10.5" height="10.5" fill="#e6e9ef" stroke="#444" stroke-width=".9"/><path d="M11.5 4.5L15 1V11.5L11.5 15Z" fill="#c2c8d2" stroke="#444" stroke-width=".9"/></symbol>
</defs></svg>

<div class="panel" style="left:4px;top:76px;width:299px;height:25px;">
<svg style="position:absolute;left:5px;top:7px" width="11" height="9" viewBox="0 0 11 9"><path d="M0 4.5L5 0.5V8.5Z M5.5 4.5L10.5 0.5V8.5Z" fill="#333"/></svg>
<div class="ptxt" style="left:26px;top:5px">BROWSER</div>
<svg style="position:absolute;left:277px;top:6px" width="11" height="11" viewBox="0 0 11 11"><circle cx="5.5" cy="5.5" r="5" fill="#222"/><rect x="2.5" y="4.7" width="6" height="1.6" fill="#fff"/></svg>
<div style="position:absolute;left:292px;top:4px;width:1px;height:15px;background:#777"></div><div style="position:absolute;left:294px;top:4px;width:1px;height:15px;background:#999"></div>
</div>
<div class="row" style="left:41px;top:106px;width:159px;height:22px;background:#c7c7c7"></div>
<div class="row" style="left:43px;top:108px;width:131px;height:18px;background:#7b7b7b"></div>
<svg style="position:absolute;left:179px;top:111px" width="13" height="13" viewBox="0 0 13 13"><circle cx="6.5" cy="6.5" r="5.5" fill="#fff" stroke="#333" stroke-width="1.3"/><circle cx="6.5" cy="6.5" r="2.6" fill="#222"/></svg>
<svg style="position:absolute;left:22px;top:111px" width="12" height="12"><use href="#triF"/></svg>
<svg style="position:absolute;left:47px;top:109px" width="12" height="16"><use href="#bulbY"/></svg>
<svg style="position:absolute;left:71px;top:109px" width="16" height="16"><use href="#cube"/></svg>
<div class="rtxt" style="left:102px;top:110px;color:#fff;font-weight:bold">Untitled v5</div>
<div class="row" style="left:59px;top:132px;width:152px;height:22px"></div>
<svg style="position:absolute;left:41px;top:136px" width="10" height="13"><use href="#triO"/></svg>
<svg style="position:absolute;left:63px;top:135px" width="16" height="16"><use href="#gear"/></svg>
<div class="rtxt" style="left:94px;top:136px">Document Settings</div>
<div class="row" style="left:59px;top:158px;width:127px;height:22px"></div>
<svg style="position:absolute;left:41px;top:162px" width="10" height="13"><use href="#triO"/></svg>
<svg style="position:absolute;left:63px;top:162px" width="16" height="14"><use href="#folder"/></svg>
<div class="rtxt" style="left:94px;top:162px">Named Views</div>
<div class="row" style="left:59px;top:184px;width:108px;height:22px"></div>
<svg style="position:absolute;left:41px;top:188px" width="10" height="13"><use href="#triO"/></svg>
<svg style="position:absolute;left:65px;top:187px" width="12" height="16"><use href="#bulbB"/></svg>
<svg style="position:absolute;left:89px;top:188px" width="16" height="14"><use href="#folder"/></svg>
<div class="rtxt" style="left:120px;top:188px">Origin</div>
<div class="row" style="left:59px;top:210px;width:113px;height:22px"></div>
<svg style="position:absolute;left:41px;top:214px" width="10" height="13"><use href="#triO"/></svg>
<svg style="position:absolute;left:65px;top:213px" width="12" height="16"><use href="#bulbY"/></svg>
<svg style="position:absolute;left:89px;top:214px" width="16" height="14"><use href="#folder"/></svg>
<div class="rtxt" style="left:120px;top:214px">Bodies</div>
<div class="row" style="left:59px;top:236px;width:123px;height:22px"></div>
<svg style="position:absolute;left:40px;top:241px" width="12" height="12"><use href="#triF"/></svg>
<svg style="position:absolute;left:65px;top:239px" width="12" height="16"><use href="#bulbY"/></svg>
<svg style="position:absolute;left:89px;top:240px" width="16" height="14"><use href="#folder"/></svg>
<div class="rtxt" style="left:120px;top:240px">Sketches</div>
<div class="row" style="left:76px;top:262px;width:118px;height:22px"></div>
<svg style="position:absolute;left:82px;top:265px" width="12" height="16"><use href="#bulbB"/></svg>
<svg style="position:absolute;left:106px;top:265px" width="16" height="16"><use href="#skic"/></svg>
<div class="rtxt" style="left:137px;top:266px">Sketch1</div>
<div class="row" style="left:76px;top:288px;width:118px;height:22px"></div>
<svg style="position:absolute;left:82px;top:291px" width="12" height="16"><use href="#bulbB"/></svg>
<svg style="position:absolute;left:106px;top:291px" width="16" height="16"><use href="#skic"/></svg>
<div class="rtxt" style="left:137px;top:292px">Sketch4</div>
<div class="panel" style="left:4px;top:885px;width:300px;height:25px;">
<div class="ptxt" style="left:26px;top:5px">COMMENTS</div>
<svg style="position:absolute;left:277px;top:6px" width="11" height="11" viewBox="0 0 11 11"><circle cx="5.5" cy="5.5" r="5" fill="#222"/><path d="M2.5 5.5h6M5.5 2.5v6" stroke="#fff" stroke-width="1.6"/></svg>
<div style="position:absolute;left:294px;top:6px;width:1px;height:11px;background:#777"></div><div style="position:absolute;left:296px;top:6px;width:1px;height:11px;background:#999"></div>
</div>
<div class="nav" style="left:828px;width:146px"></div>
<div class="nav" style="left:981px;width:111px"></div>
<svg style="position:absolute;left:828px;top:883px" width="264" height="27" viewBox="828 883 264 27">
<g fill="#333">
<path d="M854 893.5h7l-3.5 4z"/><path d="M964 893.5h7l-3.5 4z"/><path d="M1004 893.5h7l-3.5 4z"/><path d="M1041 893.5h7l-3.5 4z"/><path d="M1078 893.5h7l-3.5 4z"/>
</g>
<!-- orbit -->
<path d="M838 888.5Q833 891 833 896Q833 901 838 904" fill="none" stroke="#555" stroke-width="1.1"/>
<ellipse cx="841" cy="896" rx="3" ry="8" fill="none" stroke="#555" stroke-width="1.1"/>
<path d="M843 891Q849 892 848 897Q846 901 842 899.5" fill="none" stroke="#555" stroke-width="1.1"/>
<path d="M840 894.5v4M838 896.5h4" stroke="#1f74d8" stroke-width="1.3"/>
<!-- look at -->
<rect x="868" y="893" width="15" height="11" fill="#f4f4f4" stroke="#333" stroke-width="1.1"/><rect x="871" y="896" width="9" height="4" fill="#b8b8b8" stroke="#555" stroke-width=".8"/><path d="M870 891L873 888L879 890L881 888" fill="none" stroke="#555" stroke-width="1"/>
<!-- pan hand -->
<path d="M895 902Q891 898 892 895L894 896V889Q894 887.5 895.5 888V894V887Q897 885.5 898.5 887V894V887.5Q900 886.5 901.5 888V894V889Q903 888 904 889.5V898Q903 904 898 904Z" fill="#fafafa" stroke="#333" stroke-width="1"/>
<!-- zoom -->
<circle cx="921" cy="895" r="4.5" fill="#e6f0f3" stroke="#333" stroke-width="1.2"/><path d="M924 898.5l3.5 3.5" stroke="#333" stroke-width="2"/><path d="M928 887v5M925.5 889.5h5M925.5 893.5h5" stroke="#333" stroke-width="1"/>
<!-- fit -->
<rect x="942" y="886.5" width="15" height="16" fill="none" stroke="#555" stroke-width="1" stroke-dasharray="1.5 1.5"/><circle cx="948.5" cy="894" r="5.5" fill="#e6f0f3" stroke="#333" stroke-width="1.2"/><path d="M952.5 898l4 4" stroke="#333" stroke-width="2.2"/>
<!-- display -->
<rect x="985.5" y="887.5" width="15.5" height="12.5" rx="1" fill="#eef0f3" stroke="#333" stroke-width="1.1"/><rect x="987.5" y="889.3" width="11.5" height="8.6" fill="#93b4e0" stroke="#55739f" stroke-width=".6"/><path d="M990.5 903h6l-.8-3h-4.4z" fill="#e6e6e6" stroke="#444" stroke-width=".7"/>
<!-- grid -->
<defs><linearGradient id="gridg" x1="0" y1="0" x2="0" y2="1"><stop offset="0" stop-color="#777b82"/><stop offset="1" stop-color="#9aa0aa"/></linearGradient></defs>
<rect x="1022" y="887.5" width="15" height="15.5" fill="url(#gridg)" stroke="#444" stroke-width="1"/>
<path d="M1025.75 887.5v15.5M1029.5 887.5v15.5M1033.25 887.5v15.5M1022 891.4h15M1022 895.25h15M1022 899.1h15" stroke="#f2f2f2" stroke-width="1.1"/>
<!-- viewports -->
<g fill="#c9d9f1" stroke="#2f56a0" stroke-width=".9"><rect x="1058.5" y="888" width="7" height="6.5"/><rect x="1066.5" y="888" width="7" height="6.5"/><rect x="1058.5" y="895.5" width="7" height="6.5"/><rect x="1066.5" y="895.5" width="7" height="6.5"/></g>
<g fill="#a9c1e6" stroke="#5b7bb8" stroke-width=".5"><rect x="1060" y="890" width="4" height="2.5"/><rect x="1068" y="890" width="4" height="2.5"/><rect x="1060" y="897.5" width="4" height="2.5"/><rect x="1068" y="897.5" width="4" height="2.5"/></g>
</svg>
<!-- view cube -->
<svg style="position:absolute;left:1800px;top:14px" width="110" height="110" viewBox="1800 14 110 110">
<defs><radialGradient id="cubeSh" cx=".5" cy=".5" r=".5"><stop offset="0" stop-color="#000" stop-opacity=".18"/><stop offset="1" stop-color="#000" stop-opacity="0"/></radialGradient></defs>
<ellipse cx="1862" cy="96" rx="34" ry="12" fill="url(#cubeSh)" transform="rotate(-25 1862 96)"/>
<path d="M1822.6 40.6L1862.4 29.1L1890 43.7L1844.8 58.2Z" fill="#eaeaea" fill-opacity=".85"/>
<path d="M1844.8 58.2L1890 43.7L1890 85.8L1847.8 101.9Z" fill="#e6e6e6" fill-opacity=".9"/>
<path d="M1822.6 40.6L1844.8 58.2L1847.8 101.9L1828.4 80.4Z" fill="#e2e2e2" fill-opacity=".9"/>
<g fill="none" stroke="#555" stroke-width=".9" stroke-dasharray="3 2.2">
<path d="M1822.6 40.6L1862.4 29.1L1890 43.7"/><path d="M1844.8 58.2L1890 43.7L1890 85.8L1847.8 101.9"/><path d="M1844.8 58.2L1847.8 101.9"/><path d="M1822.6 40.6L1844.8 58.2"/>
</g>
<path d="M1821 34L1828.4 81" stroke="#55d455" stroke-width="1.6"/>
<path d="M1828.4 81L1852 106" stroke="#6a70e0" stroke-width="1.6"/>
<path d="M1816.5 21.5L1819.8 26.5L1823 21.5M1819.8 26.5V31" fill="none" stroke="#55d455" stroke-width="1.4"/>
<path d="M1853 110.5H1859.5L1853 117.5H1860" fill="none" stroke="#6a70e0" stroke-width="1.4"/>
<text x="0" y="0" transform="translate(1851 50) rotate(-22)" font-family="Liberation Sans" font-size="8" font-weight="bold" fill="#8a8e94">TOP</text>
<text x="0" y="0" transform="translate(1851 84) rotate(-20)" font-family="Liberation Sans" font-size="11" font-weight="bold" fill="#8a8e94">FRONT</text>
<text x="0" y="0" transform="translate(1832 64) rotate(40) scale(-1 1)" font-family="Liberation Sans" font-size="6" font-weight="bold" fill="#8a8e94">LEFT</text>
</svg>

</body></html>
